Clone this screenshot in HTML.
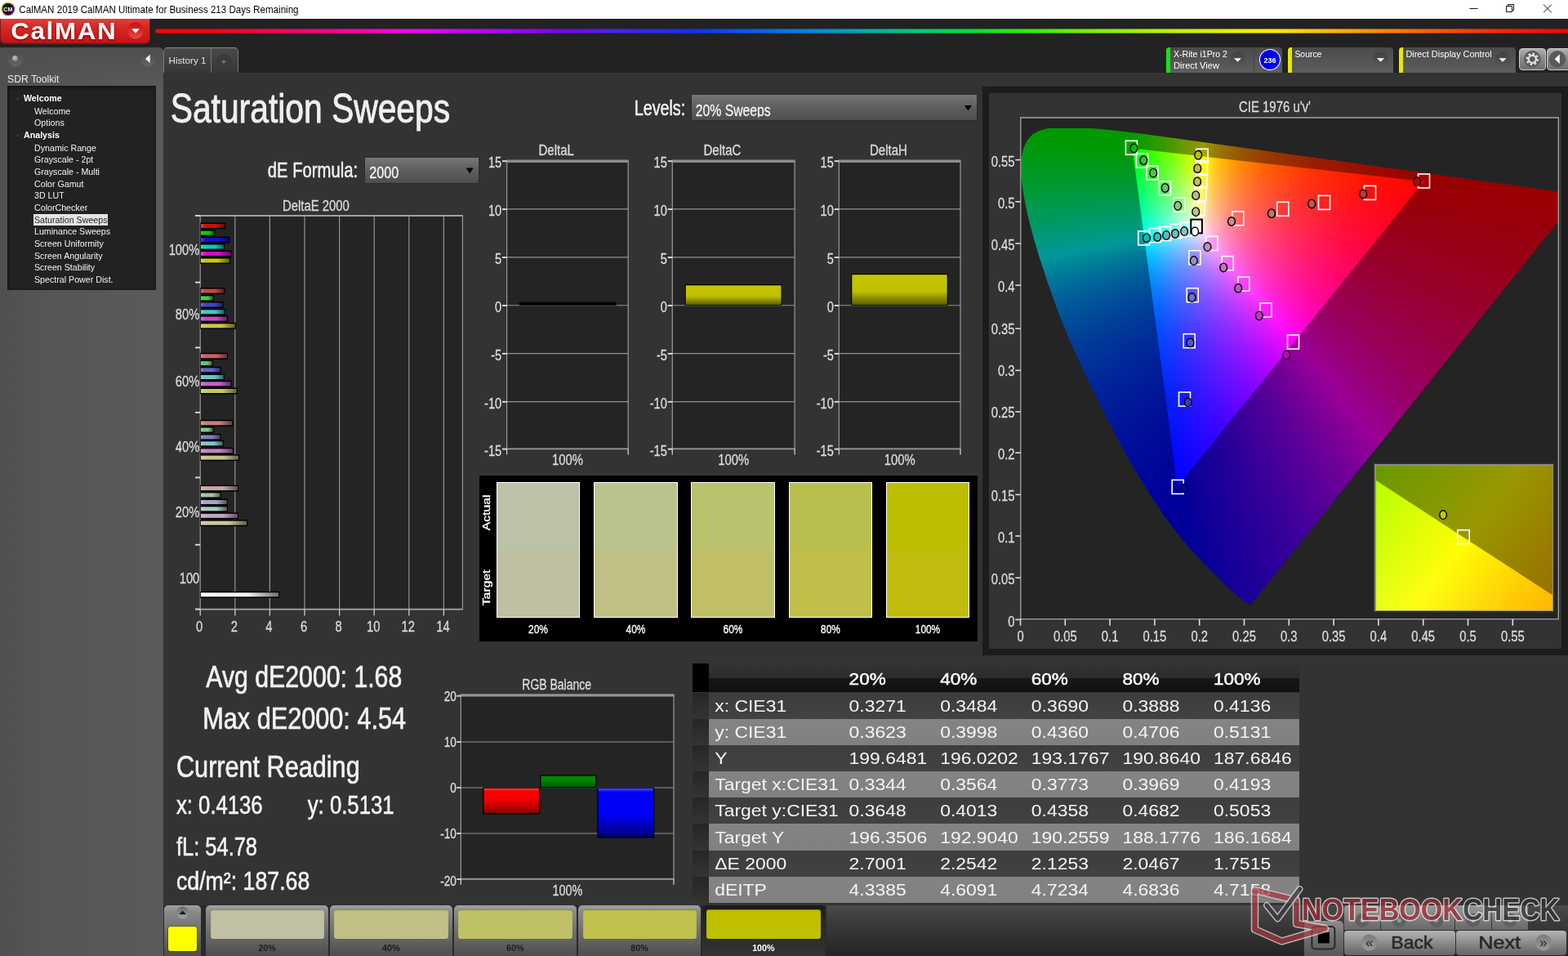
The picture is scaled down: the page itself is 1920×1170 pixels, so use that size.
<!DOCTYPE html>
<html lang="en"><head><meta charset="utf-8"><title>CalMAN 2019 - Saturation Sweeps</title>
<style>
*{margin:0;padding:0;box-sizing:border-box}
html,body{width:1920px;height:1170px;overflow:hidden;background:#333;font-family:"Liberation Sans",sans-serif}
#r{position:relative;width:1920px;height:1170px;overflow:hidden;background:#333}
#r div{position:absolute}
#r svg{position:absolute;left:0;top:0;will-change:transform}
svg text{font-family:"Liberation Sans",sans-serif;white-space:pre}
.g div{position:absolute;}
</style></head>
<body><div id="r">
<div style="left:0px;top:23px;width:1920px;height:66px;background:#222"></div>
<div style="left:0px;top:0px;width:1920px;height:23px;background:#fff"></div>
<div style="left:0.5px;top:23px;width:182px;height:29.6px;background:linear-gradient(#e0403c 0,#d62724 35%,#c41414 100%);border-radius:0 0 5px 5px;box-shadow:0 1px 0 #6a2020, 1px 0 0 #7a1a1a, -1px 0 0 #7a1a1a, inset 0 -1px 0 #a81010"></div>
<div style="left:190px;top:35px;width:1730px;height:6px;background:linear-gradient(90deg,#ff0000 0px,#ff0010 70px,#ff0060 160px,#ff00a0 230px,#ff00e0 290px,#f000ff 330px,#b800ff 410px,#8000ff 490px,#4820ff 570px,#1030ff 660px,#0070f0 760px,#0098d0 830px,#00c090 910px,#00dc40 990px,#30f000 1070px,#80f000 1150px,#b8f000 1230px,#e8f000 1310px,#ffe800 1370px,#ffa800 1460px,#ff5c00 1560px,#ff2000 1660px,#ff0000 1730px);border-radius:3px 0 0 3px"></div>
<div style="left:190px;top:35px;width:1730px;height:6px;background:linear-gradient(rgba(34,34,34,.75) 0,rgba(34,34,34,0) 22%,rgba(34,34,34,0) 78%,rgba(34,34,34,.75) 100%)"></div>
<div style="left:0px;top:58px;width:200px;height:1112px;background:linear-gradient(90deg,#4f4f4f 0,#555 22%,#5a5a5a 100%);border-radius:0 6px 0 0"></div>
<div style="left:0px;top:58px;width:200px;height:50px;background:linear-gradient(#4f4f4f 0,rgba(88,88,88,0) 100%);border-radius:0 6px 0 0"></div>
<div style="left:9px;top:105px;width:182px;height:250px;background:#222;box-shadow:inset 0 2px 4px #111, inset 2px 0 3px #1a1a1a"></div>
<div style="left:200px;top:58px;width:92px;height:31px;background:linear-gradient(#4a4a4a,#363636);border:1px solid #777;border-top-color:#8c8c8c;border-bottom:none;border-radius:5px 5px 0 0"></div>
<div style="left:258px;top:59px;width:1px;height:30px;background:#777"></div>
<div style="left:200px;top:89px;width:1720px;height:1020px;background:#333"></div>
<div style="left:1428.3px;top:58px;width:142px;height:31px;background:linear-gradient(#4a4a4a 0,#5e5e5e 100%);border-radius:4px 4px 0 0;overflow:hidden"><div style="left:0;top:0;width:5px;height:32px;background:#18e018"></div></div>
<div style="left:1535px;top:60px;width:1px;height:28px;background:#444"></div>
<div style="left:1576.7px;top:58px;width:129.5px;height:31px;background:linear-gradient(#4a4a4a 0,#5e5e5e 100%);border-radius:4px 4px 0 0;overflow:hidden"><div style="left:0;top:0;width:5px;height:32px;background:#e8e800"></div></div>
<div style="left:1712.7px;top:58px;width:143px;height:31px;background:linear-gradient(#4a4a4a 0,#5e5e5e 100%);border-radius:4px 4px 0 0;overflow:hidden"><div style="left:0;top:0;width:5px;height:32px;background:#e8e800"></div></div>
<div style="left:1860px;top:58.5px;width:33px;height:27.5px;background:linear-gradient(#b0b0b0 0,#8a8a8a 45%,#6e6e6e 100%);border-radius:4px;border:1px solid #ccc;box-shadow:0 0 0 1px #222"></div>
<div style="left:1893.5px;top:58.5px;width:30px;height:27.5px;background:linear-gradient(#b0b0b0 0,#8a8a8a 45%,#6e6e6e 100%);border-radius:4px 0 0 4px;border:1px solid #ccc;box-shadow:0 0 0 1px #222"></div>
<div style="left:846px;top:114.6px;width:350.7px;height:33px;background:linear-gradient(#777 0,#5e5e5e 50%,#4e4e4e 100%);border:1px solid #2b2b2b;overflow:hidden"></div>
<div style="left:446.2px;top:191.7px;width:140.6px;height:33px;background:linear-gradient(#777 0,#5e5e5e 50%,#4e4e4e 100%);border:1px solid #2b2b2b"></div>
<div style="left:587px;top:582.3px;width:610px;height:203px;background:#000"></div>
<div style="left:1203px;top:106px;width:717px;height:696px;background:#1c1c1c"></div>
<div style="left:1211px;top:114.4px;width:701px;height:679.4px;background:#333"></div>
<div style="left:1249.8px;top:144px;width:658.5px;height:613.6px;background:#242424"></div>
<div style="left:1250px;top:144px;width:657.7px;height:613px;overflow:hidden"><div class="g" style="left:0;top:0;width:697.7px;height:613px;clip-path:polygon(277.63px 594.95px,278.45px 595.28px,279.32px 595.45px,280.2px 595.44px,281.07px 595.26px,281.88px 594.91px,282.61px 594.42px,283.23px 593.78px,679.1px 100.51px,679.57px 99.79px,679.9px 99px,680.07px 98.15px,680.07px 97.29px,679.91px 96.44px,679.59px 95.64px,679.13px 94.92px,678.54px 94.3px,677.84px 93.8px,677.05px 93.44px,676.21px 93.24px,227.58px 30.67px,153.2px 20.59px,125.28px 17.11px,106.59px 15.02px,97.24px 14.11px,83.02px 13px,36.62px 13px,31.87px 13.52px,22.88px 15.93px,21.8px 16.38px,14.62px 20.55px,13.49px 21.49px,8.1px 27.68px,7.41px 28.73px,3.78px 36.49px,3.49px 37.33px,1.42px 45.84px,0.46px 55.4px,0.4px 65.21px,0.97px 74.59px,2.01px 83.92px,3.39px 93.21px,5.03px 102.46px,6.88px 111.57px,8.95px 120.75px,11.18px 129.88px,16.05px 148.09px,18.65px 157.11px,24.15px 175.06px,33px 201.8px,42.47px 228.29px,49.17px 245.83px,52.65px 254.55px,59.87px 271.88px,67.43px 289.1px,79.25px 314.66px,91.48px 340.02px,104.03px 365.24px,116.99px 390.2px,125.95px 406.74px,135.16px 423.05px,139.88px 431.16px,149.58px 447.3px,159.53px 463.17px,164.64px 471.05px,175.23px 486.65px,180.65px 494.22px,186.28px 501.74px,192.12px 509.22px,198.05px 516.5px,204.07px 523.6px,210.29px 530.66px,216.68px 537.65px,229.67px 551.13px,256.08px 577.53px,276.89px 594.46px)"><div style="left:27px;top:12px;width:77px;height:2px;background:linear-gradient(90deg,#0f0,#0f0 76px)"></div><div style="left:20px;top:14px;width:102px;height:2px;background:linear-gradient(90deg,#0f0,#0f0 101px)"></div><div style="left:17px;top:16px;width:122px;height:2px;background:linear-gradient(90deg,#0f0,#03ff00 118px,#09ff00 121px)"></div><div style="left:13px;top:18px;width:142px;height:2px;background:linear-gradient(90deg,#0f0,#02ff00 122px,#2eff00 141px)"></div><div style="left:11px;top:20px;width:159px;height:2px;background:linear-gradient(90deg,#0f0,#02ff00 124px,#53ff00 158px)"></div><div style="left:9px;top:22px;width:176px;height:2px;background:linear-gradient(90deg,#0f0,#01ff00 126px,#6bff00 169px,#7bff00 175px)"></div><div style="left:8px;top:24px;width:191px;height:2px;background:linear-gradient(90deg,#00ff03,#03ff00 128px,#6aff00 170px,#a5ff00 190px)"></div><div style="left:6px;top:26px;width:208px;height:2px;background:linear-gradient(90deg,#00ff05,#0f0 84px,#02ff00 130px,#6aff00 172px,#d6ff00 207px)"></div><div style="left:5px;top:28px;width:224px;height:2px;background:linear-gradient(90deg,#00ff08,#0f0 88px,#01ff00 131px,#6aff00 173px,#daff00 209px,#fffd00 220px,#fff200 223px)"></div><div style="left:4px;top:30px;width:239px;height:2px;background:linear-gradient(90deg,#00ff0b,#0f0 103px,#03ff00 133px,#6dff00 175px,#daff00 210px,#fffc00 221px,#ffc800 238px)"></div><div style="left:3px;top:32px;width:255px;height:2px;background:linear-gradient(90deg,#00ff0e,#0f0 119px,#02ff00 134px,#6dff00 176px,#daff00 211px,#fffc00 222px,#ffc300 241px,#ffa600 254px)"></div><div style="left:2px;top:34px;width:270px;height:2px;background:linear-gradient(90deg,#00ff10,#02ff00 135px,#6aff00 176px,#d7ff00 211px,#ff0 222px,#ffc400 241px,#ff9000 267px,#ff8c00 269px)"></div><div style="left:2px;top:36px;width:284px;height:2px;background:linear-gradient(90deg,#00ff13,#01ff00 135px,#69ff00 176px,#d8ff00 211px,#fffe00 222px,#ffc400 241px,#ff8f00 267px,#ff7800 283px)"></div><div style="left:1px;top:38px;width:300px;height:2px;background:linear-gradient(90deg,#00ff16,#03ff02 137px,#6cff00 178px,#dcff00 213px,#fffe00 223px,#ffc300 242px,#ff8e00 268px,#ff6500 299px)"></div><div style="left:1px;top:40px;width:314px;height:2px;background:linear-gradient(90deg,#00ff18,#02ff06 137px,#6cff00 178px,#d8ff00 212px,#fffd00 223px,#ffc300 242px,#ff8e00 268px,#ff5f00 305px,#ff5700 313px)"></div><div style="left:0px;top:42px;width:329px;height:2px;background:linear-gradient(90deg,#00ff1b,#02ff09 138px,#6cff01 179px,#d9ff00 213px,#fffd00 224px,#ffc200 243px,#ff8d00 269px,#ff5e00 306px,#ff4b00 328px)"></div><div style="left:0px;top:44px;width:344px;height:2px;background:linear-gradient(90deg,#00ff1e,#01ff0d 138px,#69ff05 178px,#d6ff00 212px,#fffc00 224px,#ffc100 243px,#ff8d00 269px,#ff5e00 306px,#ff3f00 343px)"></div><div style="left:0px;top:46px;width:358px;height:2px;background:linear-gradient(90deg,#00ff21,#03ff10 139px,#6bff09 179px,#daff02 213px,#ff0 223px,#ffc300 242px,#ff8e00 268px,#ff5e00 305px,#ff3600 357px)"></div><div style="left:0px;top:48px;width:372px;height:2px;background:linear-gradient(90deg,#00ff23,#02ff14 139px,#6bff0d 179px,#daff06 213px,#ffff04 223px,#ffc500 241px,#ff9000 266px,#ff6000 302px,#ff3600 356px,#ff2e00 371px)"></div><div style="left:0px;top:50px;width:387px;height:2px;background:linear-gradient(90deg,#00ff26,#02ff18 139px,#6bff11 179px,#daff0b 213px,#fffe08 223px,#ffc503 241px,#ff9000 266px,#ff6000 302px,#ff3600 356px,#ff2600 386px)"></div><div style="left:0px;top:52px;width:401px;height:2px;background:linear-gradient(90deg,#00ff29,#01ff1b 139px,#6bff15 179px,#dbff0f 213px,#fffd0d 223px,#ffc407 241px,#ff8f01 266px,#ff5f00 302px,#ff3500 356px,#ff2000 400px)"></div><div style="left:0px;top:54px;width:415px;height:2px;background:linear-gradient(90deg,#00ff2c,#03ff1f 140px,#6bff1a 179px,#d7ff14 212px,#fffd12 223px,#ffc30b 241px,#ff8e04 266px,#ff5f00 302px,#ff3500 356px,#ff1a00 414px)"></div><div style="left:0px;top:56px;width:430px;height:2px;background:linear-gradient(90deg,#00ff2e,#02ff23 140px,#6aff1e 179px,#d8ff19 212px,#fffc16 223px,#ffc30f 241px,#ff8e07 266px,#ff5e01 302px,#ff3400 356px,#ff1500 429px)"></div><div style="left:0px;top:58px;width:444px;height:2px;background:linear-gradient(90deg,#00ff31,#02ff27 140px,#6aff22 179px,#d8ff1d 212px,#ffff1c 222px,#ffc212 241px,#ff8d0a 266px,#ff5e03 302px,#ff3400 356px,#ff1000 442px,#ff1000 443px)"></div><div style="left:0px;top:60px;width:458px;height:2px;background:linear-gradient(90deg,#00ff34,#01ff2b 140px,#6aff26 179px,#d9ff22 212px,#ffff21 222px,#ffc417 240px,#ff8e0e 265px,#ff5f06 300px,#ff3500 353px,#f10 437px,#ff0c00 457px)"></div><div style="left:0px;top:62px;width:473px;height:2px;background:linear-gradient(90deg,#00ff37,#03ff2e 141px,#6aff2b 179px,#d9ff27 212px,#fffe25 222px,#ffc31b 240px,#ff8e11 265px,#ff5f08 300px,#ff3501 353px,#f10 437px,#ff0700 472px)"></div><div style="left:0px;top:64px;width:487px;height:2px;background:linear-gradient(90deg,#00ff3a,#02ff32 141px,#6aff2f 179px,#d9ff2c 212px,#fffe2a 222px,#ffc31f 240px,#ff8d14 265px,#ff5e0b 300px,#ff3403 353px,#f10 437px,#ff0400 486px)"></div><div style="left:0px;top:66px;width:501px;height:2px;background:linear-gradient(90deg,#00ff3d,#01ff36 141px,#69ff34 179px,#d6ff31 211px,#fffd2f 222px,#ffc223 240px,#ff8e18 264px,#ff5e0e 299px,#ff3505 351px,#f10 434px,#f00 500px)"></div><div style="left:0px;top:68px;width:516px;height:2px;background:linear-gradient(90deg,#00ff40,#01ff3a 141px,#69ff38 179px,#d6ff36 211px,#fffc34 222px,#ffc127 240px,#ff8d1b 264px,#ff5e10 299px,#ff3407 351px,#f10 434px,#f00 515px)"></div><div style="left:0px;top:70px;width:530px;height:2px;background:linear-gradient(90deg,#00ff42,#03ff3e 142px,#6cff3d 180px,#dbff3b 212px,#fffc39 222px,#ffc12b 240px,#ff8d1e 264px,#ff5d13 299px,#ff3408 351px,#ff1000 434px,#f00 513px,#f00 529px)"></div><div style="left:0px;top:72px;width:544px;height:2px;background:linear-gradient(90deg,#00ff45,#02ff42 142px,#6cff41 180px,#dbff40 212px,#ffff3f 221px,#ffc330 239px,#ff8e22 263px,#ff5f16 297px,#ff350b 348px,#ff1202 429px,#f00 511px,#f00 543px)"></div><div style="left:0px;top:74px;width:559px;height:2px;background:linear-gradient(90deg,#00ff48,#01ff47 142px,#69ff46 179px,#d8ff45 211px,#ffff45 221px,#ffc535 238px,#ff8f26 262px,#ff5f18 296px,#ff350d 347px,#ff1103 428px,#f00 510px,#f00 558px)"></div><div style="left:0px;top:76px;width:573px;height:2px;background:linear-gradient(90deg,#00ff4b,#01ff4b 142px,#68ff4a 179px,#d8ff4a 211px,#fffe4a 221px,#ffc439 238px,#ff8e29 262px,#ff5f1b 296px,#ff350f 347px,#ff1104 428px,#f00 508px,#f00 572px)"></div><div style="left:0px;top:78px;width:587px;height:2px;background:linear-gradient(90deg,#00ff4e,#02ff4f 143px,#6bff4f 180px,#d8ff4f 211px,#fffd4f 221px,#ffc33d 238px,#ff8e2c 262px,#ff5e1e 296px,#ff3411 347px,#ff1106 428px,#f00 506px,#f00 586px)"></div><div style="left:0px;top:80px;width:602px;height:2px;background:linear-gradient(90deg,#00ff51,#02ff53 143px,#6bff54 180px,#d9ff55 211px,#fffd54 221px,#ffc341 238px,#ff8f30 261px,#ff6021 294px,#ff3613 344px,#ff1208 423px,#ff0001 504px,#f00 601px)"></div><div style="left:0px;top:82px;width:616px;height:2px;background:linear-gradient(90deg,#00ff54,#01ff57 143px,#6bff59 180px,#d9ff5a 211px,#fffc59 221px,#ffc246 238px,#ff8e34 261px,#ff5f24 294px,#ff3515 344px,#ff1109 423px,#ff0002 503px,#f00 615px)"></div><div style="left:0px;top:84px;width:630px;height:2px;background:linear-gradient(90deg,#00ff57,#03ff5c 144px,#6bff5e 180px,#daff5f 211px,#ffff60 220px,#ffc44b 237px,#ff8f38 260px,#ff6027 293px,#ff3618 342px,#ff120b 420px,#ff0003 501px,#f00 629px)"></div><div style="left:1px;top:86px;width:644px;height:2px;background:linear-gradient(90deg,#00ff5b,#02ff60 143px,#6aff63 179px,#daff65 210px,#ff6 219px,#ffc34f 236px,#ff8e3b 259px,#ff5f29 292px,#ff351a 341px,#ff120c 419px,#ff0005 498px,#f00 643px)"></div><div style="left:1px;top:88px;width:658px;height:2px;background:linear-gradient(90deg,#00ff5e,#02ff65 143px,#6aff67 179px,#d6ff6a 209px,#fffe6b 219px,#ffc354 236px,#ff8e3f 259px,#ff5e2c 292px,#ff351c 341px,#ff110e 419px,#ff0006 497px,#f00 657px)"></div><div style="left:1px;top:90px;width:658px;height:2px;background:linear-gradient(90deg,#00ff61,#01ff69 143px,#6aff6d 179px,#d7ff70 209px,#fffd71 219px,#ffc258 236px,#ff8d42 259px,#ff5e2f 292px,#ff341e 341px,#ff100f 420px,#ff0007 495px,#f00 657px)"></div><div style="left:2px;top:92px;width:657px;height:2px;background:linear-gradient(90deg,#00ff64,#03ff6e 143px,#6aff72 178px,#d7ff76 208px,#fffd76 218px,#ffc45e 234px,#ff9047 256px,#ff6033 288px,#ff3621 336px,#ff1211 412px,#ff0008 492px,#f00 656px)"></div><div style="left:2px;top:94px;width:657px;height:2px;background:linear-gradient(90deg,#00ff67,#02ff72 143px,#6aff77 178px,#d8ff7b 208px,#fffc7c 218px,#ffc362 234px,#ff8f4b 256px,#ff6036 288px,#ff3623 336px,#ff1213 412px,#ff000a 490px,#f00 656px)"></div><div style="left:2px;top:96px;width:657px;height:2px;background:linear-gradient(90deg,#00ff6a,#01ff77 143px,#69ff7c 178px,#d8ff81 208px,#feff83 217px,#ffc367 234px,#ff8f4f 256px,#ff5f38 288px,#ff3525 336px,#ff1214 412px,#ff000b 489px,#f00 656px)"></div><div style="left:3px;top:98px;width:656px;height:2px;background:linear-gradient(90deg,#00ff6e,#01ff7c 142px,#69ff81 177px,#d8ff87 207px,#ffff89 216px,#ffc56d 232px,#ff9053 254px,#ff613c 285px,#ff3728 332px,#ff1317 406px,#ff000c 486px,#ff0001 655px)"></div><div style="left:3px;top:100px;width:656px;height:2px;background:linear-gradient(90deg,#00ff71,#03ff81 143px,#6cff87 178px,#d9ff8d 207px,#fffe8f 216px,#ffc472 232px,#ff8f57 254px,#ff603f 285px,#ff362a 332px,#ff1218 406px,#ff000e 484px,#ff0002 655px)"></div><div style="left:3px;top:102px;width:656px;height:2px;background:linear-gradient(90deg,#00ff74,#02ff85 143px,#6cff8c 178px,#d9ff93 207px,#fffe95 216px,#ffc376 232px,#ff8e5b 254px,#ff6042 285px,#ff362c 332px,#ff1219 407px,#ff000f 483px,#ff0002 655px)"></div><div style="left:4px;top:104px;width:655px;height:2px;background:linear-gradient(90deg,#00ff78,#01ff8a 142px,#68ff91 176px,#d6ff99 205px,#fffd9b 215px,#ffc37b 231px,#ff8e5e 253px,#ff5f45 284px,#ff352e 331px,#ff111b 406px,#ff0010 480px,#ff0003 654px)"></div><div style="left:4px;top:106px;width:655px;height:2px;background:linear-gradient(90deg,#00ff7b,#01ff8f 142px,#68ff97 176px,#d6ff9f 205px,#fffca1 215px,#ffc280 231px,#ff8d62 253px,#ff5e48 284px,#ff3531 331px,#ff111c 406px,#f01 479px,#ff0004 654px)"></div><div style="left:5px;top:108px;width:654px;height:2px;background:linear-gradient(90deg,#00ff7e,#03ff94 142px,#6bff9d 176px,#dbffa6 205px,#fffca6 214px,#ffc185 230px,#ff8c66 252px,#ff5e4b 283px,#ff3433 330px,#ff101e 405px,#ff0013 476px,#ff0005 653px)"></div><div style="left:5px;top:110px;width:654px;height:2px;background:linear-gradient(90deg,#00ff82,#02ff99 142px,#6bffa2 176px,#dbffac 205px,#ffffaf 213px,#ffc38b 229px,#ff8f6c 250px,#ff6150 280px,#ff3737 325px,#ff1321 397px,#ff0014 474px,#ff0005 653px)"></div><div style="left:5px;top:112px;width:654px;height:2px;background:linear-gradient(90deg,#00ff85,#01ff9e 142px,#6bffa8 176px,#d7ffb2 204px,#ffffb5 213px,#ffc692 228px,#ff9171 249px,#ff6154 279px,#ff3739 324px,#ff1323 395px,#ff0016 472px,#ff0006 653px)"></div><div style="left:6px;top:114px;width:653px;height:2px;background:linear-gradient(90deg,#00ff89,#00ffa3 141px,#67ffad 174px,#d3ffb8 202px,#fffebc 212px,#ffc597 227px,#ff9075 248px,#ff6057 278px,#ff363c 323px,#ff1325 394px,#ff0017 469px,#ff0007 652px)"></div><div style="left:6px;top:116px;width:653px;height:2px;background:linear-gradient(90deg,#00ff8c,#03ffa9 142px,#6bffb3 175px,#d8ffbf 203px,#fffdc2 212px,#ffc49c 227px,#ff8f79 248px,#ff605a 278px,#ff363e 323px,#ff1226 394px,#ff0019 468px,#ff0008 652px)"></div><div style="left:7px;top:118px;width:652px;height:2px;background:linear-gradient(90deg,#00ff90,#02ffae 141px,#6affb9 174px,#d9ffc5 202px,#fffdc8 211px,#ffc3a1 226px,#ff8e7d 247px,#ff5f5d 277px,#ff3540 322px,#ff1128 394px,#ff001a 465px,#ff0009 651px)"></div><div style="left:7px;top:120px;width:652px;height:2px;background:linear-gradient(90deg,#00ff93,#01ffb3 141px,#6affbf 174px,#d9ffcc 202px,#fffcce 211px,#ffc3a6 226px,#ff8e81 247px,#ff5e60 277px,#ff3542 322px,#ff1129 394px,#ff001c 464px,#ff0009 651px)"></div><div style="left:8px;top:122px;width:651px;height:2px;background:linear-gradient(90deg,#00ff97,#00ffb7 137px,#03ffb9 141px,#6affc5 173px,#d9ffd3 201px,#feffd7 209px,#ffc2ab 225px,#ff8d85 246px,#ff5e63 276px,#ff3445 321px,#ff102b 393px,#ff001d 461px,#ff000a 650px)"></div><div style="left:8px;top:124px;width:651px;height:2px;background:linear-gradient(90deg,#00ff9b,#00ffbc 135px,#02ffbe 141px,#6affcb 173px,#d6ffd9 200px,#ffffdf 209px,#ffc4b3 224px,#ff908c 244px,#ff6169 273px,#ff374a 316px,#ff132f 385px,#ff001f 459px,#ff000b 650px)"></div><div style="left:9px;top:126px;width:650px;height:2px;background:linear-gradient(90deg,#00ff9e,#00ffc0 131px,#02ffc4 140px,#69ffd2 172px,#d6ffe0 199px,#fffee5 208px,#ffc3b8 223px,#ff9090 243px,#ff606c 272px,#ff364c 315px,#ff1230 384px,#ff0020 456px,#ff000c 649px)"></div><div style="left:9px;top:128px;width:650px;height:2px;background:linear-gradient(90deg,#00ffa2,#00ffc5 129px,#01ffc9 140px,#69ffd8 172px,#d6ffe7 199px,#fffeec 208px,#ffc3bd 223px,#ff8f94 243px,#ff5f6f 272px,#ff364e 315px,#ff1232 384px,#f02 455px,#ff000c 649px)"></div><div style="left:10px;top:130px;width:648px;height:2px;background:linear-gradient(90deg,#00ffa6,#00ffc9 126px,#03ffcf 140px,#6dffdf 172px,#dbffef 199px,#fffdf3 207px,#ffc2c3 222px,#ff8e99 242px,#ff5f72 271px,#ff3551 314px,#ff1134 383px,#ff0023 452px,#ff000d 647px)"></div><div style="left:10px;top:132px;width:647px;height:2px;background:linear-gradient(90deg,#0fa,#00ffce 123px,#02ffd5 140px,#6cffe5 172px,#dcfff6 199px,#fffcf9 207px,#ffc1c8 222px,#ff8d9d 242px,#ff5e75 271px,#ff3553 314px,#ff1135 383px,#ff0025 451px,#ff000e 646px)"></div><div style="left:11px;top:134px;width:644px;height:2px;background:linear-gradient(90deg,#00ffad,#00ffd3 121px,#01ffdb 139px,#68ffeb 170px,#d8fffd 197px,#fff7fc 207px,#ffbdcb 222px,#ff889e 243px,#ff5975 273px,#ff3152 318px,#ff0e34 390px,#ff0026 449px,#ff000f 643px)"></div><div style="left:11px;top:136px;width:643px;height:2px;background:linear-gradient(90deg,#00ffb1,#00ffd7 118px,#01ffe0 139px,#68fff2 170px,#ccfbff 195px,#fff1ff 208px,#ffb9cd 223px,#ff85a0 244px,#ff5878 274px,#ff2f54 320px,#ff0c35 394px,#ff0028 449px,#ff0010 642px)"></div><div style="left:12px;top:138px;width:640px;height:2px;background:linear-gradient(90deg,#00ffb5,#00ffdc 116px,#03ffe7 139px,#6cfff9 170px,#acf9ff 187px,#ffe8fd 209px,#ffafcb 225px,#ff7d9d 247px,#ff5074 279px,#ff2851 328px,#ff0732 408px,#ff0028 452px,#f01 639px)"></div><div style="left:12px;top:140px;width:638px;height:2px;background:linear-gradient(90deg,#00ffb9,#00ffe0 114px,#02ffed 139px,#76fcff 173px,#ffdefc 211px,#ffa6c8 228px,#ff7499 252px,#ff4770 287px,#ff214c 341px,#ff002e 430px,#ff0015 605px,#ff0012 637px)"></div><div style="left:13px;top:142px;width:636px;height:2px;background:linear-gradient(90deg,#00ffbd,#00ffe5 111px,#01fff3 138px,#54fcff 163px,#ffdaff 211px,#ffa3cb 228px,#ff719b 252px,#ff4572 287px,#ff1f4e 341px,#ff0030 429px,#ff0016 601px,#ff0013 635px)"></div><div style="left:13px;top:144px;width:634px;height:2px;background:linear-gradient(90deg,#00ffc1,#00ffe9 109px,#00fff9 138px,#3afaff 156px,#f9d4ff 211px,#ffcaf6 215px,#ff93c1 234px,#ff6392 261px,#ff3969 301px,#ff1445 364px,#ff002f 436px,#ff0015 612px,#ff0014 633px)"></div><div style="left:14px;top:146px;width:631px;height:2px;background:linear-gradient(90deg,#00ffc5,#0fe 107px,#03ffff 138px,#bed9ff 195px,#ffc9fc 214px,#ff92c6 233px,#ff6295 260px,#ff386b 300px,#ff1447 363px,#ff0031 434px,#ff0017 607px,#ff0015 630px)"></div><div style="left:14px;top:148px;width:630px;height:2px;background:linear-gradient(90deg,#00ffc9,#00fff2 105px,#00fcff 133px,#02f8ff 138px,#bdd2ff 196px,#ffc4fe 215px,#ff8fc8 234px,#ff6098 261px,#ff376d 301px,#ff1349 364px,#f03 432px,#ff0018 601px,#ff0015 629px)"></div><div style="left:15px;top:150px;width:627px;height:2px;background:linear-gradient(90deg,#00ffce,#00fff7 103px,#00faff 124px,#01f3ff 137px,#bfccff 197px,#ffbdfd 216px,#ff8ac8 235px,#ff5c98 262px,#ff346e 302px,#ff124a 365px,#ff0034 430px,#ff0019 595px,#ff0016 626px)"></div><div style="left:16px;top:152px;width:625px;height:2px;background:linear-gradient(90deg,#00ffd2,#00fffc 101px,#03ecff 137px,#c1c5ff 198px,#ffb5fc 217px,#ff83c6 237px,#ff5796 265px,#ff2f6c 307px,#ff0e48 373px,#ff0036 429px,#ff001b 592px,#ff0017 624px)"></div><div style="left:16px;top:154px;width:623px;height:2px;background:linear-gradient(90deg,#00ffd6,#00fcff 101px,#02e7ff 137px,#c0bfff 199px,#ffb1fe 218px,#ff80c8 238px,#ff5598 266px,#ff2e6e 308px,#ff0d49 374px,#ff0037 428px,#ff001c 588px,#ff0018 622px)"></div><div style="left:17px;top:156px;width:620px;height:2px;background:linear-gradient(90deg,#00ffdb,#00fcff 90px,#02e2ff 136px,#bfbaff 199px,#ffabfd 219px,#ff7bc8 239px,#ff5097 268px,#ff2b6d 311px,#ff0a48 379px,#ff0039 427px,#ff001d 585px,#ff0019 619px)"></div><div style="left:17px;top:158px;width:619px;height:2px;background:linear-gradient(90deg,#00ffdf,#00fcff 80px,#01ddff 136px,#beb4ff 200px,#ffa4fc 221px,#ff75c6 242px,#ff4c97 271px,#ff276c 315px,#ff0848 384px,#ff003a 427px,#ff001e 583px,#ff001a 618px)"></div><div style="left:18px;top:160px;width:616px;height:2px;background:linear-gradient(90deg,#00ffe3,#00fcff 70px,#03d7ff 136px,#c0aeff 201px,#ffa0fe 221px,#ff72c8 242px,#ff4a99 271px,#ff266e 315px,#ff0749 384px,#ff003c 426px,#ff001f 580px,#ff001b 615px)"></div><div style="left:18px;top:162px;width:615px;height:2px;background:linear-gradient(90deg,#00ffe7,#00fcff 60px,#02d2ff 136px,#bfa9ff 202px,#ff9afd 223px,#ff6ec8 244px,#ff4698 274px,#ff236d 319px,#ff0549 390px,#ff003b 434px,#ff001f 593px,#ff001c 614px)"></div><div style="left:19px;top:164px;width:612px;height:2px;background:linear-gradient(90deg,#00ffec,#00fbff 50px,#01ceff 135px,#bea5ff 202px,#ff94fc 224px,#ff68c6 246px,#ff4296 277px,#ff206c 323px,#ff0248 396px,#ff0029 522px,#ff001d 611px)"></div><div style="left:20px;top:166px;width:609px;height:2px;background:linear-gradient(90deg,#00fff1,#00fcff 39px,#01c9ff 134px,#bda0ff 202px,#ff91fe 224px,#ff66c8 246px,#ff4098 277px,#ff1f6e 323px,#ff0249 396px,#ff002a 521px,#ff001e 608px)"></div><div style="left:20px;top:168px;width:608px;height:2px;background:linear-gradient(90deg,#00fff5,#00fbff 30px,#02c4ff 135px,#bf9bff 204px,#ff8bfd 226px,#ff62c8 248px,#ff3d99 279px,#ff1c6e 326px,#ff0049 400px,#ff002a 527px,#ff001f 607px)"></div><div style="left:21px;top:170px;width:605px;height:2px;background:linear-gradient(90deg,#00fffa,#00f8ff 26px,#02c0ff 134px,#be96ff 204px,#ff86fc 227px,#ff5dc6 250px,#ff3997 282px,#ff196d 330px,#ff0049 403px,#ff002a 531px,#ff0020 604px)"></div><div style="left:22px;top:172px;width:603px;height:2px;background:linear-gradient(90deg,#0ff,#01bcff 133px,#bd92ff 204px,#ff83fe 227px,#ff5bc8 250px,#ff3898 282px,#ff186e 330px,#ff004b 401px,#ff002c 527px,#ff0021 602px)"></div><div style="left:22px;top:174px;width:601px;height:2px;background:linear-gradient(90deg,#00fbff,#03b8ff 134px,#bf8dff 206px,#ff7efd 229px,#ff57c8 252px,#ff3498 285px,#ff166d 334px,#ff004d 401px,#ff002d 526px,#f02 600px)"></div><div style="left:23px;top:176px;width:598px;height:2px;background:linear-gradient(90deg,#00f6ff,#02b4ff 133px,#be89ff 206px,#ff79fc 230px,#ff52c6 254px,#ff3096 288px,#ff136c 338px,#ff004e 400px,#ff002f 523px,#ff0024 597px)"></div><div style="left:23px;top:178px;width:597px;height:2px;background:linear-gradient(90deg,#00f2ff,#01b0ff 133px,#be85ff 207px,#ff76fe 231px,#ff50c8 255px,#ff2f98 289px,#ff126e 339px,#ff0050 398px,#ff0030 518px,#ff0025 596px)"></div><div style="left:24px;top:180px;width:594px;height:2px;background:linear-gradient(90deg,#00edff,#01adff 132px,#bd82ff 207px,#ff71fd 232px,#ff4dc8 256px,#ff2d98 290px,#ff106e 341px,#ff0052 396px,#ff0032 514px,#ff0026 593px)"></div><div style="left:25px;top:182px;width:592px;height:2px;background:linear-gradient(90deg,#00e9ff,#02a9ff 132px,#be7dff 208px,#ff6dfc 233px,#ff49c6 258px,#ff2997 293px,#ff0d6d 345px,#ff0054 395px,#f03 512px,#ff0027 591px)"></div><div style="left:25px;top:184px;width:590px;height:2px;background:linear-gradient(90deg,#00e5ff,#02a5ff 132px,#c079ff 210px,#ff6afe 234px,#ff47c8 259px,#ff2898 294px,#ff0c6e 346px,#ff0056 393px,#ff0035 507px,#ff0028 589px)"></div><div style="left:26px;top:186px;width:587px;height:2px;background:linear-gradient(90deg,#00e1ff,#01a2ff 131px,#bf76ff 210px,#ff66fd 235px,#ff44c8 260px,#ff2598 296px,#ff0a6e 349px,#ff0058 392px,#ff0037 505px,#ff0029 586px)"></div><div style="left:27px;top:188px;width:585px;height:2px;background:linear-gradient(90deg,#0df,#039eff 131px,#c172ff 211px,#ff62fc 236px,#ff40c6 262px,#ff2296 299px,#ff076c 354px,#ff0059 392px,#ff0038 505px,#ff002a 584px)"></div><div style="left:27px;top:190px;width:583px;height:2px;background:linear-gradient(90deg,#00d9ff,#029bff 131px,#c06eff 212px,#ff5ffe 237px,#ff3ec8 263px,#ff2198 300px,#ff076d 355px,#ff005b 392px,#ff0039 504px,#ff002b 582px)"></div><div style="left:28px;top:192px;width:581px;height:2px;background:linear-gradient(90deg,#00d5ff,#0298ff 130px,#bf6bff 212px,#ff5bfd 238px,#ff3bc8 264px,#ff1f98 301px,#ff056e 356px,#ff005b 394px,#ff0039 507px,#ff002c 580px)"></div><div style="left:29px;top:194px;width:578px;height:2px;background:linear-gradient(90deg,#00d1ff,#0195ff 129px,#bf68ff 212px,#ff57fc 239px,#ff38c6 266px,#ff1c97 304px,#ff036c 361px,#ff0048 451px,#ff002d 577px)"></div><div style="left:29px;top:196px;width:576px;height:2px;background:linear-gradient(90deg,#00ceff,#0392ff 130px,#c064ff 214px,#ff55fe 240px,#ff36c8 267px,#ff1a98 305px,#ff026e 362px,#ff0049 452px,#ff002f 575px)"></div><div style="left:30px;top:198px;width:574px;height:2px;background:linear-gradient(90deg,#00caff,#028fff 129px,#bf62ff 214px,#ff51fd 241px,#ff33c8 268px,#ff1898 307px,#ff006d 365px,#ff0049 456px,#ff0030 573px)"></div><div style="left:31px;top:200px;width:571px;height:2px;background:linear-gradient(90deg,#00c7ff,#018cff 128px,#bf5fff 214px,#ff4efc 242px,#ff30c7 270px,#ff1596 310px,#ff006c 369px,#ff0048 463px,#ff0031 570px)"></div><div style="left:31px;top:202px;width:570px;height:2px;background:linear-gradient(90deg,#00c3ff,#0389ff 129px,#c05bff 216px,#ff4cfe 243px,#ff2ec8 271px,#ff1498 311px,#ff006e 369px,#ff0049 462px,#ff0032 569px)"></div><div style="left:32px;top:204px;width:567px;height:2px;background:linear-gradient(90deg,#00c0ff,#0286ff 128px,#bf59ff 216px,#ff48fd 244px,#ff2cc8 272px,#ff1398 312px,#ff0070 367px,#ff004b 458px,#f03 566px)"></div><div style="left:33px;top:206px;width:564px;height:2px;background:linear-gradient(90deg,#00bdff,#0284ff 127px,#bf56ff 216px,#ff45fc 245px,#ff29c7 274px,#ff1097 315px,#ff0072 365px,#ff004d 455px,#ff0035 563px)"></div><div style="left:34px;top:208px;width:562px;height:2px;background:linear-gradient(90deg,#00b9ff,#0181ff 126px,#be53ff 216px,#ff43fe 245px,#ff27c8 274px,#ff0f98 315px,#ff0075 363px,#ff004f 451px,#ff0036 561px)"></div><div style="left:34px;top:210px;width:560px;height:2px;background:linear-gradient(90deg,#00b6ff,#037eff 127px,#bf50ff 218px,#ff40fd 247px,#ff25c8 276px,#ff0d98 318px,#f07 362px,#ff0051 449px,#ff0037 559px)"></div><div style="left:35px;top:212px;width:558px;height:2px;background:linear-gradient(90deg,#00b3ff,#027cff 126px,#bf4eff 218px,#ff3dfd 248px,#ff22c7 278px,#ff0b96 321px,#ff007a 360px,#ff0053 446px,#ff0038 557px)"></div><div style="left:36px;top:214px;width:555px;height:2px;background:linear-gradient(90deg,#00b0ff,#027aff 125px,#be4bff 218px,#ff3bfe 248px,#ff21c8 278px,#ff0a98 321px,#ff007c 358px,#f05 442px,#ff0039 554px)"></div><div style="left:36px;top:216px;width:553px;height:2px;background:linear-gradient(90deg,#00adff,#0377ff 126px,#bf48ff 220px,#ff38fd 250px,#ff1fc8 280px,#ff0898 323px,#ff007e 358px,#ff0057 441px,#ff003b 552px)"></div><div style="left:37px;top:218px;width:551px;height:2px;background:linear-gradient(90deg,#0af,#0275ff 125px,#c146ff 221px,#ff35fd 251px,#ff1cc7 282px,#ff0697 326px,#ff007e 359px,#ff0057 443px,#ff003c 550px)"></div><div style="left:38px;top:220px;width:548px;height:2px;background:linear-gradient(90deg,#00a8ff,#0273ff 124px,#c043ff 221px,#ff32fc 252px,#ff1ac7 283px,#ff0597 327px,#ff007d 363px,#ff0056 449px,#ff003d 547px)"></div><div style="left:39px;top:222px;width:546px;height:2px;background:linear-gradient(90deg,#00a5ff,#0171ff 123px,#bf41ff 221px,#ff30fd 252px,#ff19c8 283px,#ff0397 328px,#ff006d 394px,#ff0049 499px,#ff003e 545px)"></div><div style="left:39px;top:224px;width:544px;height:2px;background:linear-gradient(90deg,#00a2ff,#036eff 124px,#c13eff 223px,#ff2efd 254px,#ff16c7 286px,#ff0297 331px,#ff006d 398px,#ff0048 504px,#ff0040 543px)"></div><div style="left:40px;top:226px;width:541px;height:2px;background:linear-gradient(90deg,#009fff,#026cff 123px,#c03cff 223px,#ff2bfc 255px,#ff15c7 287px,#ff0097 333px,#ff006d 401px,#ff0048 509px,#ff0041 540px)"></div><div style="left:41px;top:228px;width:539px;height:2px;background:linear-gradient(90deg,#009dff,#026aff 122px,#bf3aff 223px,#ff2afd 255px,#ff13c7 288px,#ff0097 334px,#ff006d 403px,#ff0048 512px,#ff0042 538px)"></div><div style="left:41px;top:230px;width:537px;height:2px;background:linear-gradient(90deg,#009aff,#0368ff 123px,#c138ff 225px,#ff27fd 257px,#ff11c7 290px,#ff0097 337px,#ff006c 407px,#ff0048 518px,#f04 536px)"></div><div style="left:42px;top:232px;width:534px;height:2px;background:linear-gradient(90deg,#0098ff,#0266ff 122px,#c036ff 225px,#ff25fc 258px,#ff0fc7 291px,#ff009a 334px,#ff0070 402px,#ff004b 509px,#ff0045 533px)"></div><div style="left:43px;top:234px;width:532px;height:2px;background:linear-gradient(90deg,#0095ff,#0264ff 121px,#bf34ff 225px,#ff23fd 258px,#ff0ec7 292px,#ff009d 332px,#ff0072 399px,#ff004d 504px,#ff0046 531px)"></div><div style="left:44px;top:236px;width:529px;height:2px;background:linear-gradient(90deg,#0093ff,#0162ff 120px,#bf32ff 225px,#ff21fd 259px,#ff0cc7 293px,#ff00a0 330px,#ff0075 396px,#ff004f 499px,#ff0048 528px)"></div><div style="left:44px;top:238px;width:528px;height:2px;background:linear-gradient(90deg,#0091ff,#0360ff 121px,#c030ff 227px,#ff1efc 261px,#ff0ac6 296px,#ff00a2 330px,#ff0076 396px,#ff0050 498px,#ff0049 527px)"></div><div style="left:45px;top:240px;width:525px;height:2px;background:linear-gradient(90deg,#008eff,#025eff 120px,#bf2eff 227px,#ff1dfd 261px,#ff09c7 296px,#ff00a5 328px,#ff0079 393px,#ff0053 493px,#ff004b 524px)"></div><div style="left:46px;top:242px;width:522px;height:2px;background:linear-gradient(90deg,#008cff,#025dff 119px,#bf2cff 227px,#ff1bfd 262px,#ff07c7 297px,#ff00a7 327px,#ff007b 391px,#ff0054 490px,#ff004c 521px)"></div><div style="left:47px;top:244px;width:520px;height:2px;background:linear-gradient(90deg,#0089ff,#035bff 119px,#c02aff 228px,#ff19fc 263px,#ff05c6 299px,#ff00a6 330px,#ff0079 396px,#ff0053 498px,#ff004d 519px)"></div><div style="left:48px;top:246px;width:517px;height:2px;background:linear-gradient(90deg,#0087ff,#0259ff 118px,#bf28ff 228px,#ff17fd 263px,#ff04c7 299px,#ff00a0 338px,#ff0074 408px,#ff004f 516px)"></div><div style="left:48px;top:248px;width:516px;height:2px;background:linear-gradient(90deg,#0085ff,#0257ff 118px,#bf26ff 229px,#ff15fd 265px,#ff03c7 301px,#ff0097 352px,#ff006d 428px,#ff0050 515px)"></div><div style="left:49px;top:250px;width:513px;height:2px;background:linear-gradient(90deg,#0083ff,#0256ff 117px,#c024ff 230px,#ff13fc 266px,#ff01c6 303px,#ff0096 355px,#ff006c 433px,#ff0052 512px)"></div><div style="left:50px;top:252px;width:510px;height:2px;background:linear-gradient(90deg,#0081ff,#0354ff 117px,#c122ff 231px,#ff12fd 266px,#ff00c7 303px,#ff0097 355px,#ff006c 433px,#ff0053 509px)"></div><div style="left:51px;top:254px;width:508px;height:2px;background:linear-gradient(90deg,#007eff,#0252ff 116px,#c121ff 231px,#ff10fd 267px,#ff00c7 304px,#ff0097 357px,#ff006c 436px,#f05 507px)"></div><div style="left:52px;top:256px;width:505px;height:2px;background:linear-gradient(90deg,#007cff,#0251ff 115px,#c01fff 231px,#ff0efc 268px,#ff00c7 305px,#ff0097 358px,#ff006d 437px,#ff0056 504px)"></div><div style="left:52px;top:258px;width:504px;height:2px;background:linear-gradient(90deg,#007bff,#034fff 116px,#c11dff 233px,#ff0cfd 269px,#f0c 303px,#ff009b 355px,#ff0070 432px,#ff0058 503px)"></div><div style="left:53px;top:260px;width:501px;height:2px;background:linear-gradient(90deg,#0079ff,#034dff 115px,#c11cff 233px,#ff0bfd 270px,#ff00cf 301px,#ff009e 352px,#ff0073 427px,#ff0059 500px)"></div><div style="left:54px;top:262px;width:498px;height:2px;background:linear-gradient(90deg,#0076ff,#024cff 114px,#c01aff 233px,#ff09fc 271px,#ff00d3 299px,#ff00a2 349px,#ff0076 423px,#ff005b 497px)"></div><div style="left:55px;top:264px;width:496px;height:2px;background:linear-gradient(90deg,#0074ff,#024bff 113px,#bf19ff 233px,#ff08fd 271px,#ff00d5 298px,#ff00a3 348px,#ff0078 421px,#ff005c 495px)"></div><div style="left:56px;top:266px;width:493px;height:2px;background:linear-gradient(90deg,#0072ff,#0349ff 113px,#c117ff 234px,#ff06fd 272px,#ff00d6 298px,#ff00a4 348px,#ff0078 421px,#ff005e 492px)"></div><div style="left:57px;top:268px;width:491px;height:2px;background:linear-gradient(90deg,#0071ff,#0248ff 112px,#c016ff 234px,#ff04fc 273px,#ff00cd 307px,#ff009c 361px,#ff0071 441px,#ff005f 490px)"></div><div style="left:57px;top:270px;width:489px;height:2px;background:linear-gradient(90deg,#006fff,#0246ff 112px,#bf14ff 235px,#ff03fd 274px,#ff00c7 314px,#ff0097 371px,#ff006c 456px,#ff0061 488px)"></div><div style="left:58px;top:272px;width:486px;height:2px;background:linear-gradient(90deg,#006dff,#0345ff 112px,#c113ff 236px,#ff01fd 275px,#ff00c7 315px,#ff0097 372px,#ff006d 457px,#ff0063 485px)"></div><div style="left:59px;top:274px;width:484px;height:2px;background:linear-gradient(90deg,#006bff,#0343ff 111px,#c011ff 236px,#ff00fc 276px,#ff00c6 317px,#ff0096 375px,#ff006c 461px,#ff0064 483px)"></div><div style="left:60px;top:276px;width:481px;height:2px;background:linear-gradient(90deg,#0069ff,#0242ff 110px,#bf10ff 236px,#ff00fd 276px,#ff00c7 317px,#ff0097 375px,#ff006d 461px,#f06 480px)"></div><div style="left:61px;top:278px;width:479px;height:2px;background:linear-gradient(90deg,#0068ff,#0241ff 109px,#bf0fff 236px,#ff00fd 277px,#ff00c7 318px,#ff0097 377px,#ff006c 464px,#ff0067 478px)"></div><div style="left:62px;top:280px;width:476px;height:2px;background:linear-gradient(90deg,#06f,#033fff 109px,#c00dff 237px,#f0f 276px,#ff00c7 319px,#ff0097 378px,#ff006c 466px,#ff0069 475px)"></div><div style="left:63px;top:282px;width:473px;height:2px;background:linear-gradient(90deg,#0064ff,#023eff 108px,#bf0cff 237px,#fa00ff 274px,#ff00f7 282px,#ff00c2 325px,#ff0092 387px,#ff006b 472px)"></div><div style="left:63px;top:284px;width:472px;height:2px;background:linear-gradient(90deg,#0063ff,#023dff 108px,#bf0bff 238px,#f600ff 273px,#ff00fb 281px,#ff00c5 324px,#ff0095 385px,#ff006d 471px)"></div><div style="left:64px;top:286px;width:469px;height:2px;background:linear-gradient(90deg,#0061ff,#033cff 108px,#c009ff 239px,#f200ff 271px,#ff00fc 281px,#ff00c6 324px,#ff0096 385px,#ff006f 468px)"></div><div style="left:65px;top:288px;width:467px;height:2px;background:linear-gradient(90deg,#005fff,#033bff 107px,#c107ff 240px,#ef00ff 270px,#ff00fc 282px,#ff00c6 325px,#ff0096 386px,#ff0070 466px)"></div><div style="left:66px;top:290px;width:464px;height:2px;background:linear-gradient(90deg,#005eff,#0239ff 106px,#c006ff 240px,#ef00ff 270px,#ff00fb 283px,#ff00c5 327px,#ff0095 389px,#ff0072 463px)"></div><div style="left:67px;top:292px;width:461px;height:2px;background:linear-gradient(90deg,#005cff,#0238ff 105px,#c005ff 240px,#e0f 270px,#ff00fc 283px,#ff00c6 327px,#ff0096 389px,#ff0074 460px)"></div><div style="left:68px;top:294px;width:459px;height:2px;background:linear-gradient(90deg,#005aff,#0337ff 105px,#c104ff 241px,#ff00fd 283px,#ff00c7 327px,#ff0097 389px,#ff0075 458px)"></div><div style="left:69px;top:296px;width:456px;height:2px;background:linear-gradient(90deg,#0059ff,#0236ff 104px,#c003ff 241px,#ff00fd 284px,#ff00c7 328px,#ff0097 391px,#f07 455px)"></div><div style="left:70px;top:298px;width:454px;height:2px;background:linear-gradient(90deg,#0057ff,#0235ff 103px,#c002ff 241px,#ff00fc 285px,#ff00c6 330px,#ff0096 394px,#ff0079 453px)"></div><div style="left:71px;top:300px;width:451px;height:2px;background:linear-gradient(90deg,#0056ff,#0334ff 103px,#c100ff 242px,#ff00fd 285px,#ff00c7 330px,#ff0097 394px,#ff007b 450px)"></div><div style="left:72px;top:302px;width:448px;height:2px;background:linear-gradient(90deg,#0054ff,#0333ff 102px,#c000ff 242px,#ff00fd 286px,#ff00c7 331px,#ff0097 395px,#ff007d 447px)"></div><div style="left:73px;top:304px;width:446px;height:2px;background:linear-gradient(90deg,#0053ff,#0232ff 101px,#c000ff 242px,#ff00fc 287px,#ff00c6 333px,#ff0096 398px,#ff007f 445px)"></div><div style="left:74px;top:306px;width:443px;height:2px;background:linear-gradient(90deg,#0051ff,#0231ff 100px,#bf00ff 242px,#ff00fd 287px,#ff00c7 333px,#ff0097 398px,#ff0081 442px)"></div><div style="left:74px;top:308px;width:441px;height:2px;background:linear-gradient(90deg,#0050ff,#032fff 101px,#bc00ff 241px,#ff00fd 289px,#ff00c7 335px,#ff0097 401px,#ff0083 440px)"></div><div style="left:75px;top:310px;width:439px;height:2px;background:linear-gradient(90deg,#004fff,#022eff 100px,#b900ff 239px,#ff00fc 290px,#ff00c6 337px,#ff0096 404px,#ff0085 438px)"></div><div style="left:76px;top:312px;width:436px;height:2px;background:linear-gradient(90deg,#004dff,#022eff 99px,#b400ff 236px,#ff00fd 290px,#ff00c7 337px,#ff0097 404px,#ff0087 435px)"></div><div style="left:77px;top:314px;width:434px;height:2px;background:linear-gradient(90deg,#004cff,#032cff 99px,#b100ff 234px,#ff00fd 291px,#ff00c6 339px,#ff0096 407px,#ff0089 433px)"></div><div style="left:78px;top:316px;width:431px;height:2px;background:linear-gradient(90deg,#004bff,#032bff 98px,#ad00ff 231px,#ff00fc 292px,#ff00c6 340px,#ff0096 408px,#ff008b 430px)"></div><div style="left:79px;top:318px;width:428px;height:2px;background:linear-gradient(90deg,#0049ff,#022bff 97px,#a0f 229px,#ff00fd 292px,#ff00c7 340px,#ff0097 408px,#ff008d 427px)"></div><div style="left:80px;top:320px;width:426px;height:2px;background:linear-gradient(90deg,#0048ff,#022aff 96px,#a600ff 226px,#ff00fd 293px,#ff00c6 342px,#ff0096 411px,#ff008f 425px)"></div><div style="left:81px;top:322px;width:423px;height:2px;background:linear-gradient(90deg,#0047ff,#0328ff 96px,#a300ff 224px,#ff00fc 294px,#ff00c6 343px,#ff0096 413px,#ff0091 422px)"></div><div style="left:82px;top:324px;width:421px;height:2px;background:linear-gradient(90deg,#0045ff,#0228ff 95px,#9f00ff 221px,#ff00fd 294px,#ff00c7 343px,#ff0097 413px,#ff0093 420px)"></div><div style="left:83px;top:326px;width:418px;height:2px;background:linear-gradient(90deg,#04f,#0227ff 94px,#9c00ff 219px,#ff00fd 295px,#ff00c6 345px,#ff0096 416px,#ff0095 417px)"></div><div style="left:84px;top:328px;width:415px;height:2px;background:linear-gradient(90deg,#0043ff,#0326ff 94px,#9800ff 216px,#ff00fc 296px,#ff00c6 346px,#ff0098 414px)"></div><div style="left:85px;top:330px;width:413px;height:2px;background:linear-gradient(90deg,#0041ff,#0325ff 93px,#9400ff 213px,#ff00fd 296px,#ff00c7 346px,#ff009a 412px)"></div><div style="left:86px;top:332px;width:410px;height:2px;background:linear-gradient(90deg,#0040ff,#0224ff 92px,#9100ff 211px,#ff00fd 297px,#ff00c6 348px,#ff009c 409px)"></div><div style="left:87px;top:334px;width:408px;height:2px;background:linear-gradient(90deg,#003fff,#0223ff 91px,#8e00ff 209px,#ff00fc 298px,#ff00c6 349px,#ff009e 407px)"></div><div style="left:88px;top:336px;width:405px;height:2px;background:linear-gradient(90deg,#003eff,#0322ff 91px,#8b00ff 206px,#ff00fc 299px,#ff00c6 351px,#ff00a1 404px)"></div><div style="left:89px;top:338px;width:402px;height:2px;background:linear-gradient(90deg,#003dff,#0322ff 90px,#8700ff 203px,#ff00fd 299px,#ff00c6 351px,#ff00a3 401px)"></div><div style="left:90px;top:340px;width:400px;height:2px;background:linear-gradient(90deg,#003bff,#0221ff 89px,#8400ff 201px,#ff00fc 300px,#ff00c6 352px,#ff00a5 399px)"></div><div style="left:91px;top:342px;width:397px;height:2px;background:linear-gradient(90deg,#003aff,#0320ff 89px,#8100ff 198px,#ff00fc 301px,#ff00c6 354px,#ff00a8 396px)"></div><div style="left:92px;top:344px;width:395px;height:2px;background:linear-gradient(90deg,#0039ff,#031fff 88px,#7e00ff 196px,#ff00fd 301px,#ff00c6 354px,#f0a 394px)"></div><div style="left:93px;top:346px;width:392px;height:2px;background:linear-gradient(90deg,#0038ff,#021eff 87px,#7b00ff 193px,#ff00fc 302px,#ff00c7 355px,#ff00ad 391px)"></div><div style="left:94px;top:348px;width:389px;height:2px;background:linear-gradient(90deg,#0037ff,#021eff 86px,#7900ff 191px,#ff00fc 303px,#ff00c6 357px,#ff00af 388px)"></div><div style="left:95px;top:350px;width:387px;height:2px;background:linear-gradient(90deg,#0036ff,#031dff 86px,#7500ff 188px,#ff00fd 303px,#ff00c7 357px,#ff00b1 386px)"></div><div style="left:96px;top:352px;width:384px;height:2px;background:linear-gradient(90deg,#0035ff,#031cff 85px,#7300ff 186px,#ff00fc 304px,#ff00c7 358px,#ff00b4 383px)"></div><div style="left:97px;top:354px;width:382px;height:2px;background:linear-gradient(90deg,#03f,#021bff 84px,#7000ff 183px,#ff00fc 305px,#ff00c6 360px,#ff00b6 381px)"></div><div style="left:98px;top:356px;width:379px;height:2px;background:linear-gradient(90deg,#0032ff,#031aff 84px,#6d00ff 181px,#ff00fd 305px,#ff00c7 360px,#ff00b9 378px)"></div><div style="left:99px;top:358px;width:376px;height:2px;background:linear-gradient(90deg,#0031ff,#031aff 83px,#6a00ff 178px,#ff00fc 306px,#ff00c7 361px,#ff00bc 375px)"></div><div style="left:100px;top:360px;width:374px;height:2px;background:linear-gradient(90deg,#0030ff,#0219ff 82px,#6800ff 176px,#ff00fc 307px,#ff00c6 363px,#ff00be 373px)"></div><div style="left:101px;top:362px;width:371px;height:2px;background:linear-gradient(90deg,#002fff,#0318ff 82px,#6500ff 173px,#ff00fd 307px,#ff00c7 363px,#ff00c1 370px)"></div><div style="left:102px;top:364px;width:369px;height:2px;background:linear-gradient(90deg,#002eff,#0317ff 81px,#6300ff 171px,#ff00fc 308px,#ff00c7 364px,#ff00c4 368px)"></div><div style="left:103px;top:366px;width:366px;height:2px;background:linear-gradient(90deg,#002dff,#0317ff 80px,#6000ff 168px,#ff00fc 309px,#ff00c7 365px)"></div><div style="left:104px;top:368px;width:363px;height:2px;background:linear-gradient(90deg,#002cff,#0216ff 79px,#5e00ff 166px,#ff00fd 309px,#ff00ca 362px)"></div><div style="left:105px;top:370px;width:361px;height:2px;background:linear-gradient(90deg,#002bff,#0315ff 79px,#5b00ff 163px,#ff00fc 310px,#f0c 360px)"></div><div style="left:106px;top:372px;width:358px;height:2px;background:linear-gradient(90deg,#002aff,#0315ff 78px,#5900ff 161px,#ff00fc 311px,#ff00cf 357px)"></div><div style="left:107px;top:374px;width:356px;height:2px;background:linear-gradient(90deg,#0029ff,#0214ff 77px,#5600ff 158px,#ff00fd 311px,#ff00d2 355px)"></div><div style="left:108px;top:376px;width:353px;height:2px;background:linear-gradient(90deg,#0028ff,#0313ff 77px,#5400ff 156px,#ff00fc 312px,#ff00d5 352px)"></div><div style="left:109px;top:378px;width:350px;height:2px;background:linear-gradient(90deg,#0027ff,#0313ff 76px,#5100ff 153px,#ff00fc 313px,#ff00d8 349px)"></div><div style="left:110px;top:380px;width:348px;height:2px;background:linear-gradient(90deg,#0026ff,#0312ff 75px,#4f00ff 151px,#ff00fd 313px,#ff00db 347px)"></div><div style="left:111px;top:382px;width:345px;height:2px;background:linear-gradient(90deg,#0025ff,#0212ff 74px,#4d00ff 148px,#ff00fc 314px,#ff00de 344px)"></div><div style="left:112px;top:384px;width:342px;height:2px;background:linear-gradient(90deg,#0025ff,#0311ff 74px,#4b00ff 146px,#ff00fc 315px,#ff00e2 341px)"></div><div style="left:113px;top:386px;width:340px;height:2px;background:linear-gradient(90deg,#0024ff,#0310ff 73px,#4900ff 144px,#ff00fd 315px,#ff00e4 339px)"></div><div style="left:114px;top:388px;width:337px;height:2px;background:linear-gradient(90deg,#0023ff,#0210ff 72px,#4600ff 141px,#ff00fc 316px,#ff00e8 336px)"></div><div style="left:115px;top:390px;width:335px;height:2px;background:linear-gradient(90deg,#02f,#030fff 72px,#4500ff 139px,#ff00fc 317px,#ff00eb 334px)"></div><div style="left:116px;top:392px;width:332px;height:2px;background:linear-gradient(90deg,#0021ff,#030eff 71px,#4200ff 136px,#ff00fd 317px,#f0e 331px)"></div><div style="left:117px;top:394px;width:329px;height:2px;background:linear-gradient(90deg,#0020ff,#030eff 70px,#4000ff 134px,#ff00fc 318px,#ff00f2 328px)"></div><div style="left:118px;top:396px;width:327px;height:2px;background:linear-gradient(90deg,#001fff,#020dff 69px,#3f00ff 132px,#ff00fc 319px,#ff00f5 326px)"></div><div style="left:119px;top:398px;width:324px;height:2px;background:linear-gradient(90deg,#001eff,#030cff 69px,#3c00ff 129px,#fc00ff 314px,#ff00f9 323px)"></div><div style="left:121px;top:400px;width:321px;height:2px;background:linear-gradient(90deg,#001dff,#030cff 67px,#3b00ff 126px,#fb00ff 313px,#ff00fb 320px)"></div><div style="left:122px;top:402px;width:318px;height:2px;background:linear-gradient(90deg,#001cff,#020bff 66px,#3900ff 124px,#f900ff 312px,#f0f 317px)"></div><div style="left:123px;top:404px;width:315px;height:2px;background:linear-gradient(90deg,#001cff,#030bff 66px,#3800ff 122px,#f700ff 311px,#fb00ff 314px)"></div><div style="left:124px;top:406px;width:313px;height:2px;background:linear-gradient(90deg,#001bff,#030aff 65px,#3600ff 120px,#f600ff 310px,#f800ff 312px)"></div><div style="left:125px;top:408px;width:310px;height:2px;background:linear-gradient(90deg,#001aff,#030aff 64px,#3400ff 117px,#f300ff 308px,#f400ff 309px)"></div><div style="left:126px;top:410px;width:308px;height:2px;background:linear-gradient(90deg,#0019ff,#0209ff 63px,#3200ff 115px,#f100ff 307px)"></div><div style="left:127px;top:412px;width:305px;height:2px;background:linear-gradient(90deg,#0018ff,#0309ff 63px,#3100ff 113px,#ed00ff 304px)"></div><div style="left:128px;top:414px;width:302px;height:2px;background:linear-gradient(90deg,#0018ff,#0308ff 62px,#2f00ff 111px,#ea00ff 301px)"></div><div style="left:129px;top:416px;width:300px;height:2px;background:linear-gradient(90deg,#0017ff,#0308ff 61px,#2f00ff 110px,#e700ff 299px)"></div><div style="left:131px;top:418px;width:296px;height:2px;background:linear-gradient(90deg,#0016ff,#0307ff 60px,#2d00ff 107px,#e300ff 295px)"></div><div style="left:132px;top:420px;width:294px;height:2px;background:linear-gradient(90deg,#0015ff,#0306ff 59px,#2e00ff 107px,#e100ff 293px)"></div><div style="left:133px;top:422px;width:291px;height:2px;background:linear-gradient(90deg,#0014ff,#0306ff 58px,#2c00ff 105px,#d0f 290px)"></div><div style="left:134px;top:424px;width:288px;height:2px;background:linear-gradient(90deg,#0014ff,#0206ff 57px,#2d00ff 105px,#da00ff 287px)"></div><div style="left:135px;top:426px;width:286px;height:2px;background:linear-gradient(90deg,#0013ff,#0305ff 57px,#3000ff 108px,#d700ff 285px)"></div><div style="left:136px;top:428px;width:283px;height:2px;background:linear-gradient(90deg,#0012ff,#0304ff 56px,#3200ff 110px,#d400ff 282px)"></div><div style="left:137px;top:430px;width:281px;height:2px;background:linear-gradient(90deg,#01f,#0304ff 55px,#3b00ff 120px,#d100ff 280px)"></div><div style="left:139px;top:432px;width:277px;height:2px;background:linear-gradient(90deg,#0010ff,#0303ff 54px,#7100ff 178px,#ce00ff 276px)"></div><div style="left:140px;top:434px;width:274px;height:2px;background:linear-gradient(90deg,#0010ff,#0303ff 53px,#c100ff 263px,#cb00ff 273px)"></div><div style="left:141px;top:436px;width:272px;height:2px;background:linear-gradient(90deg,#000fff,#0303ff 52px,#c100ff 263px,#c900ff 271px)"></div><div style="left:142px;top:438px;width:269px;height:2px;background:linear-gradient(90deg,#000eff,#0202ff 51px,#c000ff 263px,#c500ff 268px)"></div><div style="left:143px;top:440px;width:267px;height:2px;background:linear-gradient(90deg,#000eff,#0302ff 51px,#c100ff 264px,#c300ff 266px)"></div><div style="left:145px;top:442px;width:263px;height:2px;background:linear-gradient(90deg,#000dff,#0301ff 49px,#c000ff 262px)"></div><div style="left:146px;top:444px;width:260px;height:2px;background:linear-gradient(90deg,#000cff,#0301ff 48px,#bd00ff 259px)"></div><div style="left:147px;top:446px;width:258px;height:2px;background:linear-gradient(90deg,#000bff,#0300ff 48px,#b0f 257px)"></div><div style="left:148px;top:448px;width:255px;height:2px;background:linear-gradient(90deg,#000bff,#0300ff 47px,#b700ff 254px)"></div><div style="left:149px;top:450px;width:253px;height:2px;background:linear-gradient(90deg,#000aff,#0300ff 46px,#b500ff 252px)"></div><div style="left:151px;top:452px;width:249px;height:2px;background:linear-gradient(90deg,#0009ff,#0300ff 45px,#b200ff 248px)"></div><div style="left:152px;top:454px;width:246px;height:2px;background:linear-gradient(90deg,#0009ff,#0300ff 44px,#af00ff 245px)"></div><div style="left:153px;top:456px;width:244px;height:2px;background:linear-gradient(90deg,#0008ff,#0300ff 43px,#ad00ff 243px)"></div><div style="left:154px;top:458px;width:241px;height:2px;background:linear-gradient(90deg,#0007ff,#0300ff 43px,#a0f 240px)"></div><div style="left:156px;top:460px;width:237px;height:2px;background:linear-gradient(90deg,#0006ff,#0300ff 41px,#a800ff 236px)"></div><div style="left:157px;top:462px;width:235px;height:2px;background:linear-gradient(90deg,#0006ff,#0300ff 40px,#a600ff 234px)"></div><div style="left:158px;top:464px;width:232px;height:2px;background:linear-gradient(90deg,#0005ff,#0300ff 39px,#a300ff 231px)"></div><div style="left:160px;top:466px;width:229px;height:2px;background:linear-gradient(90deg,#0004ff,#0300ff 38px,#a100ff 228px)"></div><div style="left:161px;top:468px;width:226px;height:2px;background:linear-gradient(90deg,#0004ff,#0300ff 37px,#9e00ff 225px)"></div><div style="left:162px;top:470px;width:223px;height:2px;background:linear-gradient(90deg,#0003ff,#0300ff 36px,#9b00ff 222px)"></div><div style="left:163px;top:472px;width:221px;height:2px;background:linear-gradient(90deg,#0003ff,#0300ff 36px,#9a00ff 220px)"></div><div style="left:165px;top:474px;width:217px;height:2px;background:linear-gradient(90deg,#0002ff,#0300ff 34px,#9700ff 216px)"></div><div style="left:166px;top:476px;width:215px;height:2px;background:linear-gradient(90deg,#0001ff,#0300ff 33px,#9500ff 214px)"></div><div style="left:168px;top:478px;width:211px;height:2px;background:linear-gradient(90deg,#00f,#0300ff 32px,#9300ff 210px)"></div><div style="left:169px;top:480px;width:208px;height:2px;background:linear-gradient(90deg,#00f,#0300ff 31px,#9000ff 207px)"></div><div style="left:170px;top:482px;width:206px;height:2px;background:linear-gradient(90deg,#00f,#0300ff 30px,#8e00ff 205px)"></div><div style="left:172px;top:484px;width:202px;height:2px;background:linear-gradient(90deg,#00f,#0400ff 29px,#8c00ff 201px)"></div><div style="left:173px;top:486px;width:200px;height:2px;background:linear-gradient(90deg,#00f,#0300ff 28px,#8a00ff 199px)"></div><div style="left:174px;top:488px;width:197px;height:2px;background:linear-gradient(90deg,#00f,#0300ff 27px,#8700ff 196px)"></div><div style="left:176px;top:490px;width:193px;height:2px;background:linear-gradient(90deg,#00f,#0400ff 26px,#8500ff 192px)"></div><div style="left:177px;top:492px;width:191px;height:2px;background:linear-gradient(90deg,#00f,#0300ff 25px,#8300ff 190px)"></div><div style="left:179px;top:494px;width:187px;height:2px;background:linear-gradient(90deg,#00f,#0400ff 24px,#8100ff 186px)"></div><div style="left:180px;top:496px;width:185px;height:2px;background:linear-gradient(90deg,#00f,#0400ff 23px,#7f00ff 184px)"></div><div style="left:182px;top:498px;width:181px;height:2px;background:linear-gradient(90deg,#00f,#0400ff 21px,#7d00ff 180px)"></div><div style="left:183px;top:500px;width:178px;height:2px;background:linear-gradient(90deg,#00f,#0400ff 21px,#7b00ff 177px)"></div><div style="left:185px;top:502px;width:175px;height:2px;background:linear-gradient(90deg,#00f,#0500ff 20px,#7900ff 174px)"></div><div style="left:186px;top:504px;width:172px;height:2px;background:linear-gradient(90deg,#00f,#0400ff 19px,#70f 171px)"></div><div style="left:188px;top:506px;width:169px;height:2px;background:linear-gradient(90deg,#00f,#0500ff 18px,#7500ff 168px)"></div><div style="left:189px;top:508px;width:166px;height:2px;background:linear-gradient(90deg,#00f,#0500ff 17px,#7300ff 165px)"></div><div style="left:191px;top:510px;width:162px;height:2px;background:linear-gradient(90deg,#00f,#0600ff 17px,#7100ff 161px)"></div><div style="left:192px;top:512px;width:160px;height:2px;background:linear-gradient(90deg,#00f,#0600ff 16px,#6f00ff 159px)"></div><div style="left:194px;top:514px;width:156px;height:2px;background:linear-gradient(90deg,#00f,#0a00ff 21px,#6d00ff 155px)"></div><div style="left:196px;top:516px;width:153px;height:2px;background:linear-gradient(90deg,#00f,#2c00ff 66px,#6c00ff 152px)"></div><div style="left:197px;top:518px;width:150px;height:2px;background:linear-gradient(90deg,#00f,#6900ff 149px)"></div><div style="left:199px;top:520px;width:146px;height:2px;background:linear-gradient(90deg,#00f,#6700ff 145px)"></div><div style="left:201px;top:522px;width:143px;height:2px;background:linear-gradient(90deg,#00f,#60f 142px)"></div><div style="left:202px;top:524px;width:140px;height:2px;background:linear-gradient(90deg,#00f,#6400ff 139px)"></div><div style="left:204px;top:526px;width:137px;height:2px;background:linear-gradient(90deg,#0100ff,#6200ff 136px)"></div><div style="left:206px;top:528px;width:133px;height:2px;background:linear-gradient(90deg,#0300ff,#6000ff 132px)"></div><div style="left:208px;top:530px;width:129px;height:2px;background:linear-gradient(90deg,#0400ff,#5e00ff 128px)"></div><div style="left:210px;top:532px;width:126px;height:2px;background:linear-gradient(90deg,#0500ff,#5d00ff 125px)"></div><div style="left:211px;top:534px;width:123px;height:2px;background:linear-gradient(90deg,#0500ff,#5b00ff 122px)"></div><div style="left:213px;top:536px;width:120px;height:2px;background:linear-gradient(90deg,#0700ff,#5a00ff 119px)"></div><div style="left:215px;top:538px;width:116px;height:2px;background:linear-gradient(90deg,#0800ff,#5800ff 115px)"></div><div style="left:217px;top:540px;width:112px;height:2px;background:linear-gradient(90deg,#0900ff,#5600ff 111px)"></div><div style="left:219px;top:542px;width:109px;height:2px;background:linear-gradient(90deg,#0a00ff,#5400ff 108px)"></div><div style="left:221px;top:544px;width:105px;height:2px;background:linear-gradient(90deg,#0b00ff,#5300ff 104px)"></div><div style="left:223px;top:546px;width:101px;height:2px;background:linear-gradient(90deg,#0c00ff,#5100ff 100px)"></div><div style="left:225px;top:548px;width:98px;height:2px;background:linear-gradient(90deg,#0d00ff,#4f00ff 97px)"></div><div style="left:227px;top:550px;width:94px;height:2px;background:linear-gradient(90deg,#0e00ff,#4e00ff 93px)"></div><div style="left:229px;top:552px;width:91px;height:2px;background:linear-gradient(90deg,#1000ff,#4c00ff 90px)"></div><div style="left:231px;top:554px;width:87px;height:2px;background:linear-gradient(90deg,#10f,#4a00ff 86px)"></div><div style="left:233px;top:556px;width:83px;height:2px;background:linear-gradient(90deg,#1200ff,#4900ff 82px)"></div><div style="left:235px;top:558px;width:80px;height:2px;background:linear-gradient(90deg,#1300ff,#4700ff 79px)"></div><div style="left:237px;top:560px;width:76px;height:2px;background:linear-gradient(90deg,#1400ff,#4600ff 75px)"></div><div style="left:239px;top:562px;width:73px;height:2px;background:linear-gradient(90deg,#1500ff,#4500ff 72px)"></div><div style="left:241px;top:564px;width:69px;height:2px;background:linear-gradient(90deg,#1600ff,#4300ff 68px)"></div><div style="left:243px;top:566px;width:65px;height:2px;background:linear-gradient(90deg,#1700ff,#4100ff 64px)"></div><div style="left:245px;top:568px;width:62px;height:2px;background:linear-gradient(90deg,#1800ff,#4000ff 61px)"></div><div style="left:247px;top:570px;width:58px;height:2px;background:linear-gradient(90deg,#1900ff,#3e00ff 57px)"></div><div style="left:249px;top:572px;width:55px;height:2px;background:linear-gradient(90deg,#1a00ff,#3d00ff 54px)"></div><div style="left:251px;top:574px;width:51px;height:2px;background:linear-gradient(90deg,#1b00ff,#3b00ff 50px)"></div><div style="left:253px;top:576px;width:47px;height:2px;background:linear-gradient(90deg,#1c00ff,#3a00ff 46px)"></div><div style="left:255px;top:578px;width:44px;height:2px;background:linear-gradient(90deg,#1d00ff,#3900ff 43px)"></div><div style="left:257px;top:580px;width:40px;height:2px;background:linear-gradient(90deg,#1e00ff,#3700ff 39px)"></div><div style="left:259px;top:582px;width:37px;height:2px;background:linear-gradient(90deg,#1f00ff,#3600ff 36px)"></div><div style="left:262px;top:584px;width:32px;height:2px;background:linear-gradient(90deg,#2100ff,#3400ff 31px)"></div><div style="left:264px;top:586px;width:28px;height:2px;background:linear-gradient(90deg,#20f,#30f 27px)"></div><div style="left:267px;top:588px;width:24px;height:2px;background:linear-gradient(90deg,#2300ff,#3200ff 23px)"></div><div style="left:269px;top:590px;width:20px;height:2px;background:linear-gradient(90deg,#2400ff,#3000ff 19px)"></div><div style="left:272px;top:592px;width:16px;height:2px;background:linear-gradient(90deg,#2600ff,#2f00ff 15px)"></div><div style="left:274px;top:594px;width:12px;height:2px;background:linear-gradient(90deg,#2700ff,#2e00ff 11px)"></div><div style="left:0;top:0;width:657.7px;height:613px;background:rgba(0,0,0,.4);clip-path:polygon(evenodd,0 0,100% 0,100% 100%,0 100%,0 0,493.47px 78.09px,136.5px 37.56px,191.78px 451.47px,493.47px 78.09px)"></div></div></div>
<div style="left:1681.3px;top:566.3px;width:223px;height:183.6px;background:#2e2e2e"></div>
<div style="left:1683.2px;top:568.2px;width:219.2px;height:179.8px;background:#8c8c8c"></div>
<div class="g" style="left:1684.6px;top:569.6px;width:216.4px;height:177px;overflow:hidden"><div style="left:0;top:0px;width:218px;height:2px;background:linear-gradient(90deg,#b1ff00 0px,#fffd00 176px,#ffeb00 217px)"></div><div style="left:0;top:2px;width:218px;height:2px;background:linear-gradient(90deg,#b2ff00 0px,#fffd00 175px,#ffea00 217px)"></div><div style="left:0;top:4px;width:218px;height:2px;background:linear-gradient(90deg,#b2ff00 0px,#fffd00 173px,#ffea00 217px)"></div><div style="left:0;top:6px;width:218px;height:2px;background:linear-gradient(90deg,#b3ff00 0px,#fffd00 172px,#ffe900 217px)"></div><div style="left:0;top:8px;width:218px;height:2px;background:linear-gradient(90deg,#b4ff00 0px,#fffd00 170px,#ffe800 217px)"></div><div style="left:0;top:10px;width:218px;height:2px;background:linear-gradient(90deg,#b4ff00 0px,#fffd00 169px,#ffe800 217px)"></div><div style="left:0;top:12px;width:218px;height:2px;background:linear-gradient(90deg,#b5ff00 0px,#fffd00 167px,#ffe700 217px)"></div><div style="left:0;top:14px;width:218px;height:2px;background:linear-gradient(90deg,#b5ff00 0px,#fffd00 166px,#ffe600 217px)"></div><div style="left:0;top:16px;width:218px;height:2px;background:linear-gradient(90deg,#b6ff00 0px,#fffd00 164px,#ffe600 217px)"></div><div style="left:0;top:18px;width:218px;height:2px;background:linear-gradient(90deg,#b6ff00 0px,#fffd00 163px,#ffe500 217px)"></div><div style="left:0;top:20px;width:218px;height:2px;background:linear-gradient(90deg,#b7ff00 0px,#fffd00 161px,#ffe400 217px)"></div><div style="left:0;top:22px;width:218px;height:2px;background:linear-gradient(90deg,#b7ff01 0px,#fffd00 160px,#ffe400 217px)"></div><div style="left:0;top:24px;width:218px;height:2px;background:linear-gradient(90deg,#b8ff01 0px,#fffd00 158px,#ffe300 217px)"></div><div style="left:0;top:26px;width:218px;height:2px;background:linear-gradient(90deg,#b8ff01 0px,#fffd00 157px,#ffe300 217px)"></div><div style="left:0;top:28px;width:218px;height:2px;background:linear-gradient(90deg,#b9ff02 0px,#fffd00 155px,#ffe200 217px)"></div><div style="left:0;top:30px;width:218px;height:2px;background:linear-gradient(90deg,#baff02 0px,#fffd00 154px,#ffe100 217px)"></div><div style="left:0;top:32px;width:218px;height:2px;background:linear-gradient(90deg,#baff02 0px,#fffd00 152px,#ffe100 217px)"></div><div style="left:0;top:34px;width:218px;height:2px;background:linear-gradient(90deg,#bbff03 0px,#f3ff00 123px,#fffd00 152px,#ffe000 217px)"></div><div style="left:0;top:36px;width:218px;height:2px;background:linear-gradient(90deg,#bbff03 0px,#e8ff00 98px,#fffd00 150px,#ffdf00 217px)"></div><div style="left:0;top:38px;width:218px;height:2px;background:linear-gradient(90deg,#bcff03 0px,#e4ff00 88px,#fffd00 148px,#ffdf00 217px)"></div><div style="left:0;top:40px;width:218px;height:2px;background:linear-gradient(90deg,#bcff03 0px,#e3ff00 84px,#fffd00 147px,#ffde00 217px)"></div><div style="left:0;top:42px;width:218px;height:2px;background:linear-gradient(90deg,#bdff04 0px,#e2ff00 82px,#fffd00 145px,#fd0 217px)"></div><div style="left:0;top:44px;width:218px;height:2px;background:linear-gradient(90deg,#beff04 0px,#e3ff00 81px,#fffd00 144px,#fd0 217px)"></div><div style="left:0;top:46px;width:218px;height:2px;background:linear-gradient(90deg,#beff04 0px,#e4ff00 82px,#fffd00 142px,#ffdc00 217px)"></div><div style="left:0;top:48px;width:218px;height:2px;background:linear-gradient(90deg,#bfff05 0px,#e5ff00 83px,#fffd00 141px,#ffdc00 217px)"></div><div style="left:0;top:50px;width:218px;height:2px;background:linear-gradient(90deg,#bfff05 0px,#e6ff00 84px,#fffd00 139px,#ffdb00 217px)"></div><div style="left:0;top:52px;width:218px;height:2px;background:linear-gradient(90deg,#c0ff05 0px,#e8ff00 86px,#fffd00 138px,#ffda00 217px)"></div><div style="left:0;top:54px;width:218px;height:2px;background:linear-gradient(90deg,#c1ff06 0px,#e9ff00 88px,#fffd00 136px,#ffda00 217px)"></div><div style="left:0;top:56px;width:218px;height:2px;background:linear-gradient(90deg,#c1ff06 0px,#ebff00 90px,#fffd00 135px,#ffd900 217px)"></div><div style="left:0;top:58px;width:218px;height:2px;background:linear-gradient(90deg,#c2ff06 0px,#edff00 92px,#fffd00 134px,#ffd900 217px)"></div><div style="left:0;top:60px;width:218px;height:2px;background:linear-gradient(90deg,#c2ff07 0px,#ef0 94px,#fffd00 132px,#ffd800 217px)"></div><div style="left:0;top:62px;width:218px;height:2px;background:linear-gradient(90deg,#c3ff07 0px,#f0ff00 97px,#fffd00 131px,#ffd700 217px)"></div><div style="left:0;top:64px;width:218px;height:2px;background:linear-gradient(90deg,#c4ff07 0px,#f2ff00 99px,#fffd00 129px,#ffd700 217px)"></div><div style="left:0;top:66px;width:218px;height:2px;background:linear-gradient(90deg,#c4ff08 0px,#f4ff00 102px,#fffd00 128px,#ffd600 217px)"></div><div style="left:0;top:68px;width:218px;height:2px;background:linear-gradient(90deg,#c5ff08 0px,#f6ff00 105px,#fffd00 127px,#ffd500 217px)"></div><div style="left:0;top:70px;width:218px;height:2px;background:linear-gradient(90deg,#c5ff08 0px,#f8ff00 107px,#fffc00 126px,#ffd500 217px)"></div><div style="left:0;top:72px;width:218px;height:2px;background:linear-gradient(90deg,#c6ff09 0px,#faff00 110px,#fffc00 126px,#ffd400 217px)"></div><div style="left:0;top:74px;width:218px;height:2px;background:linear-gradient(90deg,#c7ff09 0px,#fdff00 113px,#fff100 147px,#ffd400 217px)"></div><div style="left:0;top:76px;width:218px;height:2px;background:linear-gradient(90deg,#c7ff09 0px,#ff0 116px,#ffd300 217px)"></div><div style="left:0;top:78px;width:218px;height:2px;background:linear-gradient(90deg,#c8ff0a 0px,#fffd00 118px,#ffd200 217px)"></div><div style="left:0;top:80px;width:218px;height:2px;background:linear-gradient(90deg,#c8ff0a 0px,#fffd00 117px,#ffd200 217px)"></div><div style="left:0;top:82px;width:218px;height:2px;background:linear-gradient(90deg,#c9ff0a 0px,#fffd00 115px,#ffd100 217px)"></div><div style="left:0;top:84px;width:218px;height:2px;background:linear-gradient(90deg,#caff0b 0px,#fffd00 114px,#ffd100 217px)"></div><div style="left:0;top:86px;width:218px;height:2px;background:linear-gradient(90deg,#caff0b 0px,#fffd00 112px,#ffd000 217px)"></div><div style="left:0;top:88px;width:218px;height:2px;background:linear-gradient(90deg,#cbff0b 0px,#fffd00 111px,#ffcf00 217px)"></div><div style="left:0;top:90px;width:218px;height:2px;background:linear-gradient(90deg,#cbff0c 0px,#fffd00 109px,#ffcf00 217px)"></div><div style="left:0;top:92px;width:218px;height:2px;background:linear-gradient(90deg,#ccff0c 0px,#fffd01 108px,#ffce00 217px)"></div><div style="left:0;top:94px;width:218px;height:2px;background:linear-gradient(90deg,#cdff0c 0px,#fffd01 106px,#ffce00 217px)"></div><div style="left:0;top:96px;width:218px;height:2px;background:linear-gradient(90deg,#cdff0d 0px,#fffd02 105px,#ffcd00 217px)"></div><div style="left:0;top:98px;width:218px;height:2px;background:linear-gradient(90deg,#ceff0d 0px,#fffd02 104px,#fc0 217px)"></div><div style="left:0;top:100px;width:218px;height:2px;background:linear-gradient(90deg,#cfff0d 0px,#fffd03 102px,#ffd300 197px,#fc0 217px)"></div><div style="left:0;top:102px;width:218px;height:2px;background:linear-gradient(90deg,#cfff0e 0px,#fffd03 101px,#ffd900 181px,#ffcb00 217px)"></div><div style="left:0;top:104px;width:218px;height:2px;background:linear-gradient(90deg,#d0ff0e 0px,#fffd04 99px,#ffdb00 174px,#ffcb00 217px)"></div><div style="left:0;top:106px;width:218px;height:2px;background:linear-gradient(90deg,#d1ff0e 0px,#fffd04 98px,#ffdb00 172px,#ffca00 217px)"></div><div style="left:0;top:108px;width:218px;height:2px;background:linear-gradient(90deg,#d1ff0f 0px,#fffd05 96px,#ffdb00 172px,#ffca00 217px)"></div><div style="left:0;top:110px;width:218px;height:2px;background:linear-gradient(90deg,#d2ff0f 0px,#fffd05 95px,#ffda00 173px,#ffc900 217px)"></div><div style="left:0;top:112px;width:218px;height:2px;background:linear-gradient(90deg,#d3ff0f 0px,#fffd06 93px,#ffd900 174px,#ffc800 217px)"></div><div style="left:0;top:114px;width:218px;height:2px;background:linear-gradient(90deg,#d3ff10 0px,#fffd06 92px,#ffd700 176px,#ffc800 217px)"></div><div style="left:0;top:116px;width:218px;height:2px;background:linear-gradient(90deg,#d4ff10 0px,#fffd07 90px,#ffd600 178px,#ffc700 217px)"></div><div style="left:0;top:118px;width:218px;height:2px;background:linear-gradient(90deg,#d5ff10 0px,#fffd07 89px,#ffd400 180px,#ffc700 217px)"></div><div style="left:0;top:120px;width:218px;height:2px;background:linear-gradient(90deg,#d5ff11 0px,#fffd08 87px,#ffd300 183px,#ffc600 217px)"></div><div style="left:0;top:122px;width:218px;height:2px;background:linear-gradient(90deg,#d6ff11 0px,#fffd08 86px,#ffd100 185px,#ffc500 217px)"></div><div style="left:0;top:124px;width:218px;height:2px;background:linear-gradient(90deg,#d6ff11 0px,#fffd09 84px,#ffcf00 188px,#ffc500 217px)"></div><div style="left:0;top:126px;width:218px;height:2px;background:linear-gradient(90deg,#d7ff12 0px,#fffd09 83px,#ffce00 191px,#ffc400 217px)"></div><div style="left:0;top:128px;width:218px;height:2px;background:linear-gradient(90deg,#d8ff12 0px,#fffd0a 81px,#ffcd00 192px,#ffc400 217px)"></div><div style="left:0;top:130px;width:218px;height:2px;background:linear-gradient(90deg,#d9ff13 0px,#fffd0a 80px,#fc0 191px,#ffc300 217px)"></div><div style="left:0;top:132px;width:218px;height:2px;background:linear-gradient(90deg,#d9ff13 0px,#fffd0b 78px,#ffcd00 189px,#ffc300 217px)"></div><div style="left:0;top:134px;width:218px;height:2px;background:linear-gradient(90deg,#daff13 0px,#fffd0b 77px,#fc0 188px,#ffc200 217px)"></div><div style="left:0;top:136px;width:218px;height:2px;background:linear-gradient(90deg,#dbff14 0px,#fffd0c 75px,#ffcd00 185px,#ffc100 217px)"></div><div style="left:0;top:138px;width:218px;height:2px;background:linear-gradient(90deg,#dbff14 0px,#fffd0c 74px,#ffcd00 184px,#ffc100 217px)"></div><div style="left:0;top:140px;width:218px;height:2px;background:linear-gradient(90deg,#dcff14 0px,#fffd0d 72px,#ffcd01 182px,#ffc000 217px)"></div><div style="left:0;top:142px;width:218px;height:2px;background:linear-gradient(90deg,#ddff15 0px,#fffd0d 71px,#ffcd01 181px,#ffc000 217px)"></div><div style="left:0;top:144px;width:218px;height:2px;background:linear-gradient(90deg,#ddff15 0px,#fffd0e 69px,#ffcd02 179px,#ffbf00 217px)"></div><div style="left:0;top:146px;width:218px;height:2px;background:linear-gradient(90deg,#deff15 0px,#fffd0e 68px,#ffcc02 178px,#ffbf00 217px)"></div><div style="left:0;top:148px;width:218px;height:2px;background:linear-gradient(90deg,#dfff16 0px,#fffd0f 67px,#ffcc02 177px,#ffbe00 217px)"></div><div style="left:0;top:150px;width:218px;height:2px;background:linear-gradient(90deg,#dfff16 0px,#fffd0f 65px,#ffcd03 174px,#ffbd00 217px)"></div><div style="left:0;top:152px;width:218px;height:2px;background:linear-gradient(90deg,#e0ff17 0px,#fffd10 64px,#ffcc03 173px,#ffbd00 217px)"></div><div style="left:0;top:154px;width:218px;height:2px;background:linear-gradient(90deg,#e1ff17 0px,#fffd11 62px,#ffcd04 171px,#ffbc00 217px)"></div><div style="left:0;top:156px;width:218px;height:2px;background:linear-gradient(90deg,#e2ff17 0px,#fffd11 61px,#ffcc04 170px,#ffbc00 217px)"></div><div style="left:0;top:158px;width:218px;height:2px;background:linear-gradient(90deg,#e2ff18 0px,#fffd12 59px,#ffcd05 168px,#fb0 217px)"></div><div style="left:0;top:160px;width:218px;height:2px;background:linear-gradient(90deg,#e3ff18 0px,#fffd12 58px,#ffcc05 167px,#fb0 217px)"></div><div style="left:0;top:162px;width:218px;height:2px;background:linear-gradient(90deg,#e4ff18 0px,#fffd13 56px,#ffcc06 165px,#ffba01 217px)"></div><div style="left:0;top:164px;width:218px;height:2px;background:linear-gradient(90deg,#e4ff19 0px,#fffd13 55px,#ffcc06 164px,#ffb901 217px)"></div><div style="left:0;top:166px;width:218px;height:2px;background:linear-gradient(90deg,#e5ff19 0px,#fffd14 53px,#ffcd06 161px,#ffb901 217px)"></div><div style="left:0;top:168px;width:218px;height:2px;background:linear-gradient(90deg,#e6ff1a 0px,#fffd14 52px,#ffcc07 160px,#ffb801 217px)"></div><div style="left:0;top:170px;width:218px;height:2px;background:linear-gradient(90deg,#e7ff1a 0px,#fffd15 50px,#ffcd07 158px,#ffb802 217px)"></div><div style="left:0;top:172px;width:218px;height:2px;background:linear-gradient(90deg,#e7ff1a 0px,#fffd15 49px,#ffcc08 157px,#ffb702 217px)"></div><div style="left:0;top:174px;width:218px;height:2px;background:linear-gradient(90deg,#e8ff1b 0px,#fffd16 47px,#ffcd08 155px,#ffb702 217px)"></div><div style="left:0;top:176px;width:218px;height:1px;background:linear-gradient(90deg,#e9ff1b 0px,#fffd16 46px,#ffcc09 154px,#ffb602 217px)"></div><div style="left:0;top:0;width:218px;height:178px;background:rgba(0,0,0,.4);clip-path:polygon(0 0,100% 0,100% 159.66px,0 18.17px)"></div></div>
<div style="left:848px;top:812.1px;width:743px;height:35.4px;background:linear-gradient(#343434 0,#2b2b2b 51%,#171717 52%,#0f0f0f 100%)"></div>
<div style="left:848px;top:812.1px;width:20px;height:35.4px;background:#000"></div>
<div style="left:868px;top:847.5px;width:723px;height:32.1px;background:linear-gradient(#3d3d3d,#424242)"></div>
<div style="left:848px;top:847.5px;width:20px;height:32.1px;background:linear-gradient(#262626,#343434)"></div>
<div style="left:868px;top:879.6px;width:723px;height:32.3px;background:linear-gradient(#848484,#808080)"></div>
<div style="left:848px;top:879.6px;width:20px;height:32.3px;background:linear-gradient(#262626,#343434)"></div>
<div style="left:868px;top:911.9px;width:723px;height:31.85px;background:linear-gradient(#3d3d3d,#424242)"></div>
<div style="left:848px;top:911.9px;width:20px;height:31.85px;background:linear-gradient(#262626,#343434)"></div>
<div style="left:868px;top:943.75px;width:723px;height:32.25px;background:linear-gradient(#848484,#808080)"></div>
<div style="left:848px;top:943.75px;width:20px;height:32.25px;background:linear-gradient(#262626,#343434)"></div>
<div style="left:868px;top:976px;width:723px;height:32.3px;background:linear-gradient(#3d3d3d,#424242)"></div>
<div style="left:848px;top:976px;width:20px;height:32.3px;background:linear-gradient(#262626,#343434)"></div>
<div style="left:868px;top:1008.3px;width:723px;height:32.3px;background:linear-gradient(#848484,#808080)"></div>
<div style="left:848px;top:1008.3px;width:20px;height:32.3px;background:linear-gradient(#262626,#343434)"></div>
<div style="left:868px;top:1040.6px;width:723px;height:32.2px;background:linear-gradient(#3d3d3d,#424242)"></div>
<div style="left:848px;top:1040.6px;width:20px;height:32.2px;background:linear-gradient(#262626,#343434)"></div>
<div style="left:868px;top:1072.8px;width:723px;height:32.2px;background:linear-gradient(#848484,#808080)"></div>
<div style="left:848px;top:1072.8px;width:20px;height:32.2px;background:linear-gradient(#262626,#343434)"></div>
<div style="left:200px;top:1107.7px;width:1720px;height:62.3px;background:linear-gradient(#4a4a4a 0,#3a3a3a 35%,#242424 100%)"></div>
<div style="left:200px;top:1107.7px;width:812px;height:62.3px;background:#2a2a2a"></div>
<div style="left:201.2px;top:1108px;width:45px;height:63px;background:linear-gradient(#a2a2a2 0,#8a8a8a 12%,#6c6c6c 55%,#4c4c4c 100%);border-radius:5px 5px 0 0"></div>
<div style="left:206px;top:1134.2px;width:35.3px;height:29.8px;background:#ffff00;border-radius:3px;box-shadow:0 0 0 1px rgba(40,40,40,.35)"></div>
<div style="left:252.3px;top:1108px;width:149.7px;height:63px;background:linear-gradient(#a2a2a2 0,#8a8a8a 12%,#6c6c6c 55%,#4c4c4c 100%);border-radius:5px 5px 0 0"></div>
<div style="left:257.6px;top:1113.3px;width:139.5px;height:35.7px;background:#c0c0a2;border-radius:3px;box-shadow:inset 0 1px 1px rgba(0,0,0,.3)"></div>
<div style="left:404px;top:1108px;width:149.7px;height:63px;background:linear-gradient(#a2a2a2 0,#8a8a8a 12%,#6c6c6c 55%,#4c4c4c 100%);border-radius:5px 5px 0 0"></div>
<div style="left:409.3px;top:1113.3px;width:139.5px;height:35.7px;background:#c0c084;border-radius:3px;box-shadow:inset 0 1px 1px rgba(0,0,0,.3)"></div>
<div style="left:556px;top:1108px;width:149.7px;height:63px;background:linear-gradient(#a2a2a2 0,#8a8a8a 12%,#6c6c6c 55%,#4c4c4c 100%);border-radius:5px 5px 0 0"></div>
<div style="left:561.3px;top:1113.3px;width:139.5px;height:35.7px;background:#c0c066;border-radius:3px;box-shadow:inset 0 1px 1px rgba(0,0,0,.3)"></div>
<div style="left:708.2px;top:1108px;width:149.7px;height:63px;background:linear-gradient(#a2a2a2 0,#8a8a8a 12%,#6c6c6c 55%,#4c4c4c 100%);border-radius:5px 5px 0 0"></div>
<div style="left:713.5px;top:1113.3px;width:139.5px;height:35.7px;background:#c0c04c;border-radius:3px;box-shadow:inset 0 1px 1px rgba(0,0,0,.3)"></div>
<div style="left:860px;top:1108px;width:149.7px;height:63px;background:linear-gradient(#1a1a1a 0,#262626 30%,#343434 100%);border-radius:5px 5px 0 0"></div>
<div style="left:865.3px;top:1113.3px;width:139.5px;height:35.7px;background:#c0c000;border-radius:3px;box-shadow:inset 0 1px 1px rgba(0,0,0,.3)"></div>
<div style="left:1646px;top:1108px;width:44.4px;height:30px;background:linear-gradient(#9a9a9a 0,#808080 50%,#686868 100%);border-radius:4px 4px 0 0"></div>
<div style="left:1691.2px;top:1108px;width:44.4px;height:30px;background:linear-gradient(#9a9a9a 0,#808080 50%,#686868 100%);border-radius:4px 4px 0 0"></div>
<div style="left:1736.4px;top:1108px;width:44.4px;height:30px;background:linear-gradient(#9a9a9a 0,#808080 50%,#686868 100%);border-radius:4px 4px 0 0"></div>
<div style="left:1781.6px;top:1108px;width:44.4px;height:30px;background:linear-gradient(#9a9a9a 0,#808080 50%,#686868 100%);border-radius:4px 4px 0 0"></div>
<div style="left:1826.8px;top:1108px;width:44.4px;height:30px;background:linear-gradient(#9a9a9a 0,#808080 50%,#686868 100%);border-radius:4px 4px 0 0"></div>
<div style="left:1597px;top:1127px;width:47.6px;height:44px;background:linear-gradient(#8c8c8c 0,#6e6e6e 50%,#555 100%);border-radius:5px 5px 0 0"></div>
<div style="left:1646px;top:1139px;width:136px;height:29.6px;background:linear-gradient(#b4b4b4 0,#9c9c9c 30%,#7a7a7a 70%,#666 100%);border-radius:4px"></div>
<div style="left:1782.6px;top:1139px;width:135.8px;height:29.6px;background:linear-gradient(#b4b4b4 0,#9c9c9c 30%,#7a7a7a 70%,#666 100%);border-radius:4px"></div>
<svg width="1920" height="1170" viewBox="0 0 1920 1170">
<defs><linearGradient id="icg" x1="0" y1="0" x2="1" y2="1"><stop offset="0" stop-color="#3c3"/><stop offset=".35" stop-color="#fc0"/><stop offset=".6" stop-color="#e22"/><stop offset=".8" stop-color="#a2f"/><stop offset="1" stop-color="#22f"/></linearGradient>
<linearGradient id="lgb" x1="0" y1="0" x2="0" y2="1"><stop offset="0" stop-color="#c01018"/><stop offset="1" stop-color="#e84840"/></linearGradient>
<linearGradient id="sb1" x1="0" y1="0" x2="0" y2="1"><stop offset="0" stop-color="#4a4a4a"/><stop offset="1" stop-color="#646464"/></linearGradient>
<radialGradient id="sb2" cx=".4" cy=".35" r=".7"><stop offset="0" stop-color="#c8c8c8"/><stop offset="1" stop-color="#7a7a7a"/></radialGradient>
<linearGradient id="tbc" x1="0" y1="0" x2="0" y2="1"><stop offset="0" stop-color="#404040"/><stop offset="1" stop-color="#5a5a5a"/></linearGradient>
<clipPath id="cl1"><rect x="847" y="116" width="348" height="27.4"/></clipPath>
<linearGradient id="b0"><stop offset="0" stop-color="#d44444"/><stop offset=".18" stop-color="#c81010"/><stop offset=".6" stop-color="#c81010"/><stop offset="1" stop-color="#640808"/></linearGradient>
<linearGradient id="b1"><stop offset="0" stop-color="#44d444"/><stop offset=".18" stop-color="#10c810"/><stop offset=".6" stop-color="#10c810"/><stop offset="1" stop-color="#086408"/></linearGradient>
<linearGradient id="b2"><stop offset="0" stop-color="#4444d4"/><stop offset=".18" stop-color="#1010c8"/><stop offset=".6" stop-color="#1010c8"/><stop offset="1" stop-color="#080864"/></linearGradient>
<linearGradient id="b3"><stop offset="0" stop-color="#44d4d4"/><stop offset=".18" stop-color="#10c8c8"/><stop offset=".6" stop-color="#10c8c8"/><stop offset="1" stop-color="#086464"/></linearGradient>
<linearGradient id="b4"><stop offset="0" stop-color="#d444d4"/><stop offset=".18" stop-color="#c810c8"/><stop offset=".6" stop-color="#c810c8"/><stop offset="1" stop-color="#640864"/></linearGradient>
<linearGradient id="b5"><stop offset="0" stop-color="#d4d444"/><stop offset=".18" stop-color="#c8c810"/><stop offset=".6" stop-color="#c8c810"/><stop offset="1" stop-color="#646408"/></linearGradient>
<linearGradient id="b6"><stop offset="0" stop-color="#d46c6c"/><stop offset=".18" stop-color="#c84343"/><stop offset=".6" stop-color="#c84343"/><stop offset="1" stop-color="#642121"/></linearGradient>
<linearGradient id="b7"><stop offset="0" stop-color="#6cd46c"/><stop offset=".18" stop-color="#43c843"/><stop offset=".6" stop-color="#43c843"/><stop offset="1" stop-color="#216421"/></linearGradient>
<linearGradient id="b8"><stop offset="0" stop-color="#6c6cd4"/><stop offset=".18" stop-color="#4343c8"/><stop offset=".6" stop-color="#4343c8"/><stop offset="1" stop-color="#212164"/></linearGradient>
<linearGradient id="b9"><stop offset="0" stop-color="#6cd4d4"/><stop offset=".18" stop-color="#43c8c8"/><stop offset=".6" stop-color="#43c8c8"/><stop offset="1" stop-color="#216464"/></linearGradient>
<linearGradient id="b10"><stop offset="0" stop-color="#d46cd4"/><stop offset=".18" stop-color="#c843c8"/><stop offset=".6" stop-color="#c843c8"/><stop offset="1" stop-color="#642164"/></linearGradient>
<linearGradient id="b11"><stop offset="0" stop-color="#d4d46c"/><stop offset=".18" stop-color="#c8c843"/><stop offset=".6" stop-color="#c8c843"/><stop offset="1" stop-color="#646421"/></linearGradient>
<linearGradient id="b12"><stop offset="0" stop-color="#d48585"/><stop offset=".18" stop-color="#c86262"/><stop offset=".6" stop-color="#c86262"/><stop offset="1" stop-color="#643131"/></linearGradient>
<linearGradient id="b13"><stop offset="0" stop-color="#85d485"/><stop offset=".18" stop-color="#62c862"/><stop offset=".6" stop-color="#62c862"/><stop offset="1" stop-color="#316431"/></linearGradient>
<linearGradient id="b14"><stop offset="0" stop-color="#8585d4"/><stop offset=".18" stop-color="#6262c8"/><stop offset=".6" stop-color="#6262c8"/><stop offset="1" stop-color="#313164"/></linearGradient>
<linearGradient id="b15"><stop offset="0" stop-color="#85d4d4"/><stop offset=".18" stop-color="#62c8c8"/><stop offset=".6" stop-color="#62c8c8"/><stop offset="1" stop-color="#316464"/></linearGradient>
<linearGradient id="b16"><stop offset="0" stop-color="#d485d4"/><stop offset=".18" stop-color="#c862c8"/><stop offset=".6" stop-color="#c862c8"/><stop offset="1" stop-color="#643164"/></linearGradient>
<linearGradient id="b17"><stop offset="0" stop-color="#d4d485"/><stop offset=".18" stop-color="#c8c862"/><stop offset=".6" stop-color="#c8c862"/><stop offset="1" stop-color="#646431"/></linearGradient>
<linearGradient id="b18"><stop offset="0" stop-color="#d49a9a"/><stop offset=".18" stop-color="#c87e7e"/><stop offset=".6" stop-color="#c87e7e"/><stop offset="1" stop-color="#643f3f"/></linearGradient>
<linearGradient id="b19"><stop offset="0" stop-color="#9ad49a"/><stop offset=".18" stop-color="#7ec87e"/><stop offset=".6" stop-color="#7ec87e"/><stop offset="1" stop-color="#3f643f"/></linearGradient>
<linearGradient id="b20"><stop offset="0" stop-color="#9a9ad4"/><stop offset=".18" stop-color="#7e7ec8"/><stop offset=".6" stop-color="#7e7ec8"/><stop offset="1" stop-color="#3f3f64"/></linearGradient>
<linearGradient id="b21"><stop offset="0" stop-color="#9ad4d4"/><stop offset=".18" stop-color="#7ec8c8"/><stop offset=".6" stop-color="#7ec8c8"/><stop offset="1" stop-color="#3f6464"/></linearGradient>
<linearGradient id="b22"><stop offset="0" stop-color="#d49ad4"/><stop offset=".18" stop-color="#c87ec8"/><stop offset=".6" stop-color="#c87ec8"/><stop offset="1" stop-color="#643f64"/></linearGradient>
<linearGradient id="b23"><stop offset="0" stop-color="#d4d49a"/><stop offset=".18" stop-color="#c8c87e"/><stop offset=".6" stop-color="#c8c87e"/><stop offset="1" stop-color="#64643f"/></linearGradient>
<linearGradient id="b24"><stop offset="0" stop-color="#d4b7b7"/><stop offset=".18" stop-color="#c8a3a3"/><stop offset=".6" stop-color="#c8a3a3"/><stop offset="1" stop-color="#645151"/></linearGradient>
<linearGradient id="b25"><stop offset="0" stop-color="#b7d4b7"/><stop offset=".18" stop-color="#a3c8a3"/><stop offset=".6" stop-color="#a3c8a3"/><stop offset="1" stop-color="#516451"/></linearGradient>
<linearGradient id="b26"><stop offset="0" stop-color="#b7b7d4"/><stop offset=".18" stop-color="#a3a3c8"/><stop offset=".6" stop-color="#a3a3c8"/><stop offset="1" stop-color="#515164"/></linearGradient>
<linearGradient id="b27"><stop offset="0" stop-color="#b7d4d4"/><stop offset=".18" stop-color="#a3c8c8"/><stop offset=".6" stop-color="#a3c8c8"/><stop offset="1" stop-color="#516464"/></linearGradient>
<linearGradient id="b28"><stop offset="0" stop-color="#d4b7d4"/><stop offset=".18" stop-color="#c8a3c8"/><stop offset=".6" stop-color="#c8a3c8"/><stop offset="1" stop-color="#645164"/></linearGradient>
<linearGradient id="b29"><stop offset="0" stop-color="#d4d4b7"/><stop offset=".18" stop-color="#c8c8a3"/><stop offset=".6" stop-color="#c8c8a3"/><stop offset="1" stop-color="#646451"/></linearGradient>
<linearGradient id="bw"><stop offset="0" stop-color="#ffffff"/><stop offset=".18" stop-color="#f4f4f4"/><stop offset=".6" stop-color="#f4f4f4"/><stop offset="1" stop-color="#707070"/></linearGradient>
<linearGradient id="yb" x1="0" y1="0" x2="0" y2="1"><stop offset="0" stop-color="#cccc00"/><stop offset=".08" stop-color="#c4c400"/><stop offset=".55" stop-color="#c0c000"/><stop offset="1" stop-color="#5e5e00"/></linearGradient>
<linearGradient id="rr" x1="0" y1="0" x2="0" y2="1"><stop offset="0" stop-color="#ff4848"/><stop offset=".12" stop-color="#ff0000"/><stop offset=".45" stop-color="#f40000"/><stop offset="1" stop-color="#8a0000"/></linearGradient>
<linearGradient id="rg" x1="0" y1="0" x2="0" y2="1"><stop offset="0" stop-color="#008c00"/><stop offset=".5" stop-color="#008000"/><stop offset="1" stop-color="#005a00"/></linearGradient>
<linearGradient id="rb" x1="0" y1="0" x2="0" y2="1"><stop offset="0" stop-color="#5050ff"/><stop offset=".08" stop-color="#0000ff"/><stop offset=".55" stop-color="#0000f4"/><stop offset="1" stop-color="#000078"/></linearGradient>
<linearGradient id="upc" x1="0" y1="0" x2="0" y2="1"><stop offset="0" stop-color="#6a6a6a"/><stop offset="1" stop-color="#a4a4a4"/></linearGradient>
<linearGradient id="nbc" x1="0" y1="0" x2="0" y2="1"><stop offset="0" stop-color="#7c7c7c"/><stop offset="1" stop-color="#9a9a9a"/></linearGradient></defs>
<circle cx="9.8" cy="11" r="8" fill="#111"/><circle cx="9.8" cy="11" r="7.6" fill="none" stroke="url(#icg)" stroke-width="1.3"/>
<text transform="translate(4.26 13.6) scale(0.950 1)" font-size="7.5" fill="#fff" font-weight="bold">CM</text>
<text transform="translate(23.3 16) scale(0.967 1)" font-size="12" fill="#000">CalMAN 2019 CalMAN Ultimate for Business 213 Days Remaining</text>
<path d="M1799.5 10.5h10M1844.5 7.5h7v7h-7zM1846.5 7.5v-2h7v7h-2M1890 5.5l10 10M1900 5.5l-10 10" fill="none" stroke="#111" stroke-width="1"/>
<text transform="translate(13.2 47.6) scale(1.09 1)" font-size="28.8" font-weight="bold" fill="#fff" letter-spacing="1.5" style="filter:drop-shadow(0 1px 1px #700)">CalMAN</text>
<circle cx="166" cy="37.5" r="10" fill="url(#lgb)"/><path d="M161.2 35.3h9.6l-4.8 5.4z" fill="#fff"/>
<circle cx="18.7" cy="72.3" r="9.6" fill="#5b5b5b"/><circle cx="18.7" cy="72" r="9.3" fill="url(#sb1)"/><circle cx="18.5" cy="71.5" r="3.6" fill="url(#sb2)"/>
<circle cx="181" cy="72.3" r="9.6" fill="url(#sb1)"/><path d="M183.6 66.8v10.2l-5.6-5.1z" fill="#fff"/>
<text transform="translate(9 101) scale(0.938 1)" font-size="13" fill="#e8e8e8">SDR Toolkit</text>
<text transform="translate(29 123.8) scale(0.970 1)" font-size="11" fill="#fff" font-weight="bold">Welcome</text>
<path d="M19.5 122l3-3v3z" fill="#444"/>
<text transform="translate(42 139.8) scale(0.970 1)" font-size="11" fill="#f2f2f2">Welcome</text>
<text transform="translate(42 153.8) scale(0.970 1)" font-size="11" fill="#f2f2f2">Options</text>
<text transform="translate(29 168.8) scale(0.970 1)" font-size="11" fill="#fff" font-weight="bold">Analysis</text>
<path d="M19.5 167l3-3v3z" fill="#444"/>
<text transform="translate(42 184.8) scale(0.970 1)" font-size="11" fill="#f2f2f2">Dynamic Range</text>
<text transform="translate(42 198.8) scale(0.970 1)" font-size="11" fill="#f2f2f2">Grayscale - 2pt</text>
<text transform="translate(42 213.8) scale(0.970 1)" font-size="11" fill="#f2f2f2">Grayscale - Multi</text>
<text transform="translate(42 228.8) scale(0.970 1)" font-size="11" fill="#f2f2f2">Color Gamut</text>
<text transform="translate(42 243.1) scale(0.970 1)" font-size="11" fill="#f2f2f2">3D LUT</text>
<text transform="translate(42 257.8) scale(0.970 1)" font-size="11" fill="#f2f2f2">ColorChecker</text>
<rect x="41" y="262" width="91" height="14" fill="#e4e4e4"/>
<text transform="translate(42 272.5) scale(0.970 1)" font-size="11" fill="#222">Saturation Sweeps</text>
<text transform="translate(42 287.1) scale(0.970 1)" font-size="11" fill="#f2f2f2">Luminance Sweeps</text>
<text transform="translate(42 301.8) scale(0.970 1)" font-size="11" fill="#f2f2f2">Screen Uniformity</text>
<text transform="translate(42 316.8) scale(0.970 1)" font-size="11" fill="#f2f2f2">Screen Angularity</text>
<text transform="translate(42 330.8) scale(0.970 1)" font-size="11" fill="#f2f2f2">Screen Stability</text>
<text transform="translate(42 345.8) scale(0.970 1)" font-size="11" fill="#f2f2f2">Spectral Power Dist.</text>
<text transform="translate(206.5 78) scale(1.014 1)" font-size="11.5" fill="#e0e0e0">History 1</text>
<circle cx="274" cy="75" r="9.3" fill="#3a3a3a"/>
<text transform="translate(270.5 79.6) scale(1.000 1)" font-size="12" fill="#888">+</text>
<circle cx="1515.5" cy="73" r="9.5" fill="url(#tbc)"/><path d="M1511 71.2h9l-4.5 4.6z" fill="#fff"/>
<text transform="translate(1437 70) scale(0.964 1)" font-size="11" fill="#fff">X-Rite i1Pro 2</text>
<text transform="translate(1437 84) scale(1.010 1)" font-size="11" fill="#fff">Direct View</text>
<circle cx="1555" cy="73" r="13" fill="#fff"/><circle cx="1555" cy="73" r="12" fill="#0000f0"/>
<text transform="translate(1547.47 76.5) scale(0.950 1)" font-size="9.5" fill="#fff" font-weight="bold">236</text>
<circle cx="1690.5" cy="73" r="9.5" fill="url(#tbc)"/><path d="M1686 71.2h9l-4.5 4.6z" fill="#fff"/>
<text transform="translate(1585.4 70) scale(0.947 1)" font-size="11" fill="#fff">Source</text>
<circle cx="1840" cy="73" r="9.5" fill="url(#tbc)"/><path d="M1835.5 71.2h9l-4.5 4.6z" fill="#fff"/>
<text transform="translate(1721.4 70) scale(0.992 1)" font-size="11" fill="#fff">Direct Display Control</text>
<circle cx="1876.3" cy="72.3" r="10.3" fill="#5a5a5a"/><circle cx="1876.3" cy="72.3" r="4.6" fill="none" stroke="#ddd" stroke-width="2.4"/><circle cx="1876.3" cy="72.3" r="6.6" fill="none" stroke="#ddd" stroke-width="2.6" stroke-dasharray="2.6 2.58"/>
<circle cx="1907" cy="72.3" r="10.3" fill="#5a5a5a"/><path d="M1909.8 66.6v11.4l-6.2-5.7z" fill="#fff"/>
<text transform="translate(208.7 150) scale(0.816 1)" font-size="50" fill="#f0f0f0" stroke="#f0f0f0" stroke-width="0.9">Saturation Sweeps</text>
<text transform="translate(776.7 140.6) scale(0.753 1)" font-size="26.2" fill="#f0f0f0" stroke="#f0f0f0" stroke-width="0.5">Levels:</text>
<g clip-path="url(#cl1)">
<text transform="translate(851.7 142.3) scale(0.751 1)" font-size="21" fill="#f4f4f4" stroke="#f4f4f4" stroke-width="0.3">20% Sweeps</text>
</g>
<path d="M1180.9 128.9h9.2l-4.6 6.7z" fill="#000"/>
<text transform="translate(327.7 216.5) scale(0.793 1)" font-size="25.6" fill="#f0f0f0" stroke="#f0f0f0" stroke-width="0.5">dE Formula:</text>
<text transform="translate(452.3 217.8) scale(0.809 1)" font-size="20" fill="#f4f4f4" stroke="#f4f4f4" stroke-width="0.3">2000</text>
<path d="M570.6 205.6h9.2l-4.6 6.7z" fill="#000"/>
<rect x="245.2" y="264" width="321.2" height="481.6" fill="#242424"/>
<line x1="287.8" y1="264" x2="287.8" y2="745.6" stroke="#929292" stroke-width="1.2"/>
<line x1="330.4" y1="264" x2="330.4" y2="745.6" stroke="#929292" stroke-width="1.2"/>
<line x1="373" y1="264" x2="373" y2="745.6" stroke="#929292" stroke-width="1.2"/>
<line x1="415.6" y1="264" x2="415.6" y2="745.6" stroke="#929292" stroke-width="1.2"/>
<line x1="458.2" y1="264" x2="458.2" y2="745.6" stroke="#929292" stroke-width="1.2"/>
<line x1="500.8" y1="264" x2="500.8" y2="745.6" stroke="#929292" stroke-width="1.2"/>
<line x1="543.4" y1="264" x2="543.4" y2="745.6" stroke="#929292" stroke-width="1.2"/>
<path d="M245.2 264V745.6H566.4V264" fill="none" stroke="#929292" stroke-width="1.3"/>
<line x1="244.6" y1="264" x2="567" y2="264" stroke="#a0a0a0" stroke-width="2.2"/>
<line x1="244.6" y1="745.6" x2="567" y2="745.6" stroke="#a0a0a0" stroke-width="1.8"/>
<line x1="245.2" y1="745.6" x2="245.2" y2="753.6" stroke="#ccc" stroke-width="1.3"/>
<text transform="translate(240.08 773) scale(0.800 1)" font-size="18.5" fill="#dcdcdc" stroke="#dcdcdc" stroke-width="0.3">0</text>
<line x1="287.8" y1="745.6" x2="287.8" y2="753.6" stroke="#ccc" stroke-width="1.3"/>
<text transform="translate(282.68 773) scale(0.800 1)" font-size="18.5" fill="#dcdcdc" stroke="#dcdcdc" stroke-width="0.3">2</text>
<line x1="330.4" y1="745.6" x2="330.4" y2="753.6" stroke="#ccc" stroke-width="1.3"/>
<text transform="translate(325.28 773) scale(0.800 1)" font-size="18.5" fill="#dcdcdc" stroke="#dcdcdc" stroke-width="0.3">4</text>
<line x1="373" y1="745.6" x2="373" y2="753.6" stroke="#ccc" stroke-width="1.3"/>
<text transform="translate(367.88 773) scale(0.800 1)" font-size="18.5" fill="#dcdcdc" stroke="#dcdcdc" stroke-width="0.3">6</text>
<line x1="415.6" y1="745.6" x2="415.6" y2="753.6" stroke="#ccc" stroke-width="1.3"/>
<text transform="translate(410.48 773) scale(0.800 1)" font-size="18.5" fill="#dcdcdc" stroke="#dcdcdc" stroke-width="0.3">8</text>
<line x1="458.2" y1="745.6" x2="458.2" y2="753.6" stroke="#ccc" stroke-width="1.3"/>
<text transform="translate(448.97 773) scale(0.800 1)" font-size="18.5" fill="#dcdcdc" stroke="#dcdcdc" stroke-width="0.3">10</text>
<line x1="500.8" y1="745.6" x2="500.8" y2="753.6" stroke="#ccc" stroke-width="1.3"/>
<text transform="translate(491.57 773) scale(0.800 1)" font-size="18.5" fill="#dcdcdc" stroke="#dcdcdc" stroke-width="0.3">12</text>
<line x1="543.4" y1="745.6" x2="543.4" y2="753.6" stroke="#ccc" stroke-width="1.3"/>
<text transform="translate(534.17 773) scale(0.800 1)" font-size="18.5" fill="#dcdcdc" stroke="#dcdcdc" stroke-width="0.3">14</text>
<line x1="239" y1="264" x2="245.2" y2="264" stroke="#dedede" stroke-width="1.9"/>
<line x1="239" y1="345.6" x2="245.2" y2="345.6" stroke="#dedede" stroke-width="1.9"/>
<line x1="239" y1="425.4" x2="245.2" y2="425.4" stroke="#dedede" stroke-width="1.9"/>
<line x1="239" y1="504.8" x2="245.2" y2="504.8" stroke="#dedede" stroke-width="1.9"/>
<line x1="239" y1="584.4" x2="245.2" y2="584.4" stroke="#dedede" stroke-width="1.9"/>
<line x1="239" y1="666.7" x2="245.2" y2="666.7" stroke="#dedede" stroke-width="1.9"/>
<line x1="239" y1="745.6" x2="245.2" y2="745.6" stroke="#dedede" stroke-width="1.9"/>
<text transform="translate(346 258) scale(0.792 1)" font-size="18.8" fill="#dcdcdc" stroke="#dcdcdc" stroke-width="0.3">DeltaE 2000</text>
<text transform="translate(206.64 312.4) scale(0.775 1)" font-size="19" fill="#dcdcdc" stroke="#dcdcdc" stroke-width="0.3">100%</text>
<text transform="translate(214.83 391.4) scale(0.775 1)" font-size="19" fill="#dcdcdc" stroke="#dcdcdc" stroke-width="0.3">80%</text>
<text transform="translate(214.83 472.9) scale(0.775 1)" font-size="19" fill="#dcdcdc" stroke="#dcdcdc" stroke-width="0.3">60%</text>
<text transform="translate(214.83 552.9) scale(0.775 1)" font-size="19" fill="#dcdcdc" stroke="#dcdcdc" stroke-width="0.3">40%</text>
<text transform="translate(214.83 632.9) scale(0.775 1)" font-size="19" fill="#dcdcdc" stroke="#dcdcdc" stroke-width="0.3">20%</text>
<text transform="translate(219.73 713.9) scale(0.775 1)" font-size="19" fill="#dcdcdc" stroke="#dcdcdc" stroke-width="0.3">100</text>
<rect x="245.2" y="272.5" width="31" height="8" fill="#000"/><rect x="245.9" y="274" width="29.2" height="5" fill="url(#b0)"/>
<rect x="245.2" y="281.1" width="18.1" height="8" fill="#000"/><rect x="245.9" y="282.6" width="16.3" height="5" fill="url(#b1)"/>
<rect x="245.2" y="289.6" width="36.2" height="8" fill="#000"/><rect x="245.9" y="291.1" width="34.4" height="5" fill="url(#b2)"/>
<rect x="245.2" y="298" width="30" height="8" fill="#000"/><rect x="245.9" y="299.5" width="28.2" height="5" fill="url(#b3)"/>
<rect x="245.2" y="306.5" width="38.9" height="8" fill="#000"/><rect x="245.9" y="308" width="37.1" height="5" fill="url(#b4)"/>
<rect x="245.2" y="315" width="36.85" height="8" fill="#000"/><rect x="245.9" y="316.5" width="35.05" height="5" fill="url(#b5)"/>
<rect x="245.2" y="352.1" width="30" height="8" fill="#000"/><rect x="245.9" y="353.6" width="28.2" height="5" fill="url(#b6)"/>
<rect x="245.2" y="360.9" width="16.6" height="8" fill="#000"/><rect x="245.9" y="362.4" width="14.8" height="5" fill="url(#b7)"/>
<rect x="245.2" y="369" width="28.5" height="8" fill="#000"/><rect x="245.9" y="370.5" width="26.7" height="5" fill="url(#b8)"/>
<rect x="245.2" y="377.75" width="30.6" height="8" fill="#000"/><rect x="245.9" y="379.25" width="28.8" height="5" fill="url(#b9)"/>
<rect x="245.2" y="386.1" width="33.7" height="8" fill="#000"/><rect x="245.9" y="387.6" width="31.9" height="5" fill="url(#b10)"/>
<rect x="245.2" y="394.8" width="43.7" height="8" fill="#000"/><rect x="245.9" y="396.3" width="41.9" height="5" fill="url(#b11)"/>
<rect x="245.2" y="431.8" width="33.9" height="8" fill="#000"/><rect x="245.9" y="433.3" width="32.1" height="5" fill="url(#b12)"/>
<rect x="245.2" y="440.5" width="15.6" height="8" fill="#000"/><rect x="245.9" y="442" width="13.8" height="5" fill="url(#b13)"/>
<rect x="245.2" y="448.8" width="25.6" height="8" fill="#000"/><rect x="245.9" y="450.3" width="23.8" height="5" fill="url(#b14)"/>
<rect x="245.2" y="457.5" width="29.6" height="8" fill="#000"/><rect x="245.9" y="459" width="27.8" height="5" fill="url(#b15)"/>
<rect x="245.2" y="465.8" width="38.6" height="8" fill="#000"/><rect x="245.9" y="467.3" width="36.8" height="5" fill="url(#b16)"/>
<rect x="245.2" y="474.5" width="45.6" height="8" fill="#000"/><rect x="245.9" y="476" width="43.8" height="5" fill="url(#b17)"/>
<rect x="245.2" y="513.8" width="40" height="8" fill="#000"/><rect x="245.9" y="515.3" width="38.2" height="5" fill="url(#b18)"/>
<rect x="245.2" y="522" width="16.6" height="8" fill="#000"/><rect x="245.9" y="523.5" width="14.8" height="5" fill="url(#b19)"/>
<rect x="245.2" y="530.9" width="25.4" height="8" fill="#000"/><rect x="245.9" y="532.4" width="23.6" height="5" fill="url(#b20)"/>
<rect x="245.2" y="538.8" width="28.5" height="8" fill="#000"/><rect x="245.9" y="540.3" width="26.7" height="5" fill="url(#b21)"/>
<rect x="245.2" y="547.8" width="40.8" height="8" fill="#000"/><rect x="245.9" y="549.3" width="39" height="5" fill="url(#b22)"/>
<rect x="245.2" y="556.1" width="47.9" height="8" fill="#000"/><rect x="245.9" y="557.6" width="46.1" height="5" fill="url(#b23)"/>
<rect x="245.2" y="593.6" width="46.85" height="8" fill="#000"/><rect x="245.9" y="595.1" width="45.05" height="5" fill="url(#b24)"/>
<rect x="245.2" y="601.9" width="25.4" height="8" fill="#000"/><rect x="245.9" y="603.4" width="23.6" height="5" fill="url(#b25)"/>
<rect x="245.2" y="610.5" width="33.7" height="8" fill="#000"/><rect x="245.9" y="612" width="31.9" height="5" fill="url(#b26)"/>
<rect x="245.2" y="618.8" width="33.7" height="8" fill="#000"/><rect x="245.9" y="620.3" width="31.9" height="5" fill="url(#b27)"/>
<rect x="245.2" y="627.3" width="46.85" height="8" fill="#000"/><rect x="245.9" y="628.8" width="45.05" height="5" fill="url(#b28)"/>
<rect x="245.2" y="636.1" width="57.9" height="8" fill="#000"/><rect x="245.9" y="637.6" width="56.1" height="5" fill="url(#b29)"/>
<rect x="245.2" y="723.8" width="96.9" height="8" fill="#000"/><rect x="245.9" y="725.3" width="95.1" height="5" fill="url(#bw)"/>
<rect x="620.6" y="197" width="148.6" height="352.4" fill="#242424"/>
<line x1="620.6" y1="255.92" x2="769.2" y2="255.92" stroke="#929292" stroke-width="1.2"/>
<line x1="620.6" y1="314.83" x2="769.2" y2="314.83" stroke="#929292" stroke-width="1.2"/>
<line x1="620.6" y1="373.75" x2="769.2" y2="373.75" stroke="#929292" stroke-width="1.2"/>
<line x1="620.6" y1="432.67" x2="769.2" y2="432.67" stroke="#929292" stroke-width="1.2"/>
<line x1="620.6" y1="491.58" x2="769.2" y2="491.58" stroke="#929292" stroke-width="1.2"/>
<path d="M620.6 197V549.4H769.2V197" fill="none" stroke="#929292" stroke-width="1.3"/>
<line x1="620" y1="197.3" x2="769.8" y2="197.3" stroke="#8e8e8e" stroke-width="3.5"/>
<line x1="620" y1="549.4" x2="769.8" y2="549.4" stroke="#949494" stroke-width="1.8"/>
<line x1="620.6" y1="549.4" x2="620.6" y2="556.4" stroke="#ccc" stroke-width="1.3"/>
<line x1="769.2" y1="549.4" x2="769.2" y2="556.4" stroke="#ccc" stroke-width="1.3"/>
<line x1="615" y1="197.2" x2="620.6" y2="197.2" stroke="#dedede" stroke-width="1.9"/>
<text transform="translate(597.92 205) scale(0.800 1)" font-size="18.3" fill="#dcdcdc" stroke="#dcdcdc" stroke-width="0.3">15</text>
<line x1="615" y1="256.12" x2="620.6" y2="256.12" stroke="#dedede" stroke-width="1.9"/>
<text transform="translate(597.92 263.92) scale(0.800 1)" font-size="18.3" fill="#dcdcdc" stroke="#dcdcdc" stroke-width="0.3">10</text>
<line x1="615" y1="315.03" x2="620.6" y2="315.03" stroke="#dedede" stroke-width="1.9"/>
<text transform="translate(606.06 322.83) scale(0.800 1)" font-size="18.3" fill="#dcdcdc" stroke="#dcdcdc" stroke-width="0.3">5</text>
<line x1="615" y1="373.95" x2="620.6" y2="373.95" stroke="#dedede" stroke-width="1.9"/>
<text transform="translate(606.06 381.75) scale(0.800 1)" font-size="18.3" fill="#dcdcdc" stroke="#dcdcdc" stroke-width="0.3">0</text>
<line x1="615" y1="432.87" x2="620.6" y2="432.87" stroke="#dedede" stroke-width="1.9"/>
<text transform="translate(601.18 440.67) scale(0.800 1)" font-size="18.3" fill="#dcdcdc" stroke="#dcdcdc" stroke-width="0.3">-5</text>
<line x1="615" y1="491.78" x2="620.6" y2="491.78" stroke="#dedede" stroke-width="1.9"/>
<text transform="translate(593.04 499.58) scale(0.800 1)" font-size="18.3" fill="#dcdcdc" stroke="#dcdcdc" stroke-width="0.3">-10</text>
<line x1="615" y1="549.6" x2="620.6" y2="549.6" stroke="#dedede" stroke-width="1.9"/>
<text transform="translate(593.04 557.5) scale(0.800 1)" font-size="18.3" fill="#dcdcdc" stroke="#dcdcdc" stroke-width="0.3">-15</text>
<text transform="translate(659.46 190) scale(0.800 1)" font-size="18.8" fill="#dcdcdc" stroke="#dcdcdc" stroke-width="0.3">DeltaL</text>
<text transform="translate(675.97 568.9) scale(0.800 1)" font-size="18.5" fill="#dcdcdc" stroke="#dcdcdc" stroke-width="0.3">100%</text>
<rect x="635.8" y="369.8" width="118.8" height="4" fill="#000"/>
<rect x="823.3" y="197" width="149.8" height="352.4" fill="#242424"/>
<line x1="823.3" y1="255.92" x2="973.1" y2="255.92" stroke="#929292" stroke-width="1.2"/>
<line x1="823.3" y1="314.83" x2="973.1" y2="314.83" stroke="#929292" stroke-width="1.2"/>
<line x1="823.3" y1="373.75" x2="973.1" y2="373.75" stroke="#929292" stroke-width="1.2"/>
<line x1="823.3" y1="432.67" x2="973.1" y2="432.67" stroke="#929292" stroke-width="1.2"/>
<line x1="823.3" y1="491.58" x2="973.1" y2="491.58" stroke="#929292" stroke-width="1.2"/>
<path d="M823.3 197V549.4H973.1V197" fill="none" stroke="#929292" stroke-width="1.3"/>
<line x1="822.7" y1="197.3" x2="973.7" y2="197.3" stroke="#8e8e8e" stroke-width="3.5"/>
<line x1="822.7" y1="549.4" x2="973.7" y2="549.4" stroke="#949494" stroke-width="1.8"/>
<line x1="823.3" y1="549.4" x2="823.3" y2="556.4" stroke="#ccc" stroke-width="1.3"/>
<line x1="973.1" y1="549.4" x2="973.1" y2="556.4" stroke="#ccc" stroke-width="1.3"/>
<line x1="817.7" y1="197.2" x2="823.3" y2="197.2" stroke="#dedede" stroke-width="1.9"/>
<text transform="translate(800.62 205) scale(0.800 1)" font-size="18.3" fill="#dcdcdc" stroke="#dcdcdc" stroke-width="0.3">15</text>
<line x1="817.7" y1="256.12" x2="823.3" y2="256.12" stroke="#dedede" stroke-width="1.9"/>
<text transform="translate(800.62 263.92) scale(0.800 1)" font-size="18.3" fill="#dcdcdc" stroke="#dcdcdc" stroke-width="0.3">10</text>
<line x1="817.7" y1="315.03" x2="823.3" y2="315.03" stroke="#dedede" stroke-width="1.9"/>
<text transform="translate(808.76 322.83) scale(0.800 1)" font-size="18.3" fill="#dcdcdc" stroke="#dcdcdc" stroke-width="0.3">5</text>
<line x1="817.7" y1="373.95" x2="823.3" y2="373.95" stroke="#dedede" stroke-width="1.9"/>
<text transform="translate(808.76 381.75) scale(0.800 1)" font-size="18.3" fill="#dcdcdc" stroke="#dcdcdc" stroke-width="0.3">0</text>
<line x1="817.7" y1="432.87" x2="823.3" y2="432.87" stroke="#dedede" stroke-width="1.9"/>
<text transform="translate(803.88 440.67) scale(0.800 1)" font-size="18.3" fill="#dcdcdc" stroke="#dcdcdc" stroke-width="0.3">-5</text>
<line x1="817.7" y1="491.78" x2="823.3" y2="491.78" stroke="#dedede" stroke-width="1.9"/>
<text transform="translate(795.74 499.58) scale(0.800 1)" font-size="18.3" fill="#dcdcdc" stroke="#dcdcdc" stroke-width="0.3">-10</text>
<line x1="817.7" y1="549.6" x2="823.3" y2="549.6" stroke="#dedede" stroke-width="1.9"/>
<text transform="translate(795.74 557.5) scale(0.800 1)" font-size="18.3" fill="#dcdcdc" stroke="#dcdcdc" stroke-width="0.3">-15</text>
<text transform="translate(861.51 190) scale(0.800 1)" font-size="18.8" fill="#dcdcdc" stroke="#dcdcdc" stroke-width="0.3">DeltaC</text>
<text transform="translate(879.27 568.9) scale(0.800 1)" font-size="18.5" fill="#dcdcdc" stroke="#dcdcdc" stroke-width="0.3">100%</text>
<rect x="838.75" y="348.1" width="118.75" height="25.65" fill="#000"/>
<rect x="839.75" y="349.3" width="116.75" height="23.65" fill="url(#yb)"/>
<rect x="1027.3" y="197" width="148.7" height="352.4" fill="#242424"/>
<line x1="1027.3" y1="255.92" x2="1176" y2="255.92" stroke="#929292" stroke-width="1.2"/>
<line x1="1027.3" y1="314.83" x2="1176" y2="314.83" stroke="#929292" stroke-width="1.2"/>
<line x1="1027.3" y1="373.75" x2="1176" y2="373.75" stroke="#929292" stroke-width="1.2"/>
<line x1="1027.3" y1="432.67" x2="1176" y2="432.67" stroke="#929292" stroke-width="1.2"/>
<line x1="1027.3" y1="491.58" x2="1176" y2="491.58" stroke="#929292" stroke-width="1.2"/>
<path d="M1027.3 197V549.4H1176V197" fill="none" stroke="#929292" stroke-width="1.3"/>
<line x1="1026.7" y1="197.3" x2="1176.6" y2="197.3" stroke="#8e8e8e" stroke-width="3.5"/>
<line x1="1026.7" y1="549.4" x2="1176.6" y2="549.4" stroke="#949494" stroke-width="1.8"/>
<line x1="1027.3" y1="549.4" x2="1027.3" y2="556.4" stroke="#ccc" stroke-width="1.3"/>
<line x1="1176" y1="549.4" x2="1176" y2="556.4" stroke="#ccc" stroke-width="1.3"/>
<line x1="1021.7" y1="197.2" x2="1027.3" y2="197.2" stroke="#dedede" stroke-width="1.9"/>
<text transform="translate(1004.62 205) scale(0.800 1)" font-size="18.3" fill="#dcdcdc" stroke="#dcdcdc" stroke-width="0.3">15</text>
<line x1="1021.7" y1="256.12" x2="1027.3" y2="256.12" stroke="#dedede" stroke-width="1.9"/>
<text transform="translate(1004.62 263.92) scale(0.800 1)" font-size="18.3" fill="#dcdcdc" stroke="#dcdcdc" stroke-width="0.3">10</text>
<line x1="1021.7" y1="315.03" x2="1027.3" y2="315.03" stroke="#dedede" stroke-width="1.9"/>
<text transform="translate(1012.76 322.83) scale(0.800 1)" font-size="18.3" fill="#dcdcdc" stroke="#dcdcdc" stroke-width="0.3">5</text>
<line x1="1021.7" y1="373.95" x2="1027.3" y2="373.95" stroke="#dedede" stroke-width="1.9"/>
<text transform="translate(1012.76 381.75) scale(0.800 1)" font-size="18.3" fill="#dcdcdc" stroke="#dcdcdc" stroke-width="0.3">0</text>
<line x1="1021.7" y1="432.87" x2="1027.3" y2="432.87" stroke="#dedede" stroke-width="1.9"/>
<text transform="translate(1007.88 440.67) scale(0.800 1)" font-size="18.3" fill="#dcdcdc" stroke="#dcdcdc" stroke-width="0.3">-5</text>
<line x1="1021.7" y1="491.78" x2="1027.3" y2="491.78" stroke="#dedede" stroke-width="1.9"/>
<text transform="translate(999.74 499.58) scale(0.800 1)" font-size="18.3" fill="#dcdcdc" stroke="#dcdcdc" stroke-width="0.3">-10</text>
<line x1="1021.7" y1="549.6" x2="1027.3" y2="549.6" stroke="#dedede" stroke-width="1.9"/>
<text transform="translate(999.74 557.5) scale(0.800 1)" font-size="18.3" fill="#dcdcdc" stroke="#dcdcdc" stroke-width="0.3">-15</text>
<text transform="translate(1064.96 190) scale(0.800 1)" font-size="18.8" fill="#dcdcdc" stroke="#dcdcdc" stroke-width="0.3">DeltaH</text>
<text transform="translate(1082.72 568.9) scale(0.800 1)" font-size="18.5" fill="#dcdcdc" stroke="#dcdcdc" stroke-width="0.3">100%</text>
<rect x="1042.3" y="335" width="118.4" height="38.75" fill="#000"/>
<rect x="1043.3" y="336.2" width="116.4" height="36.75" fill="url(#yb)"/>
<rect x="608" y="590" width="102" height="166" fill="#fff"/>
<rect x="609" y="591" width="100" height="82" fill="#bcc2a8"/>
<rect x="609" y="672.7" width="100" height="82.3" fill="#bfbfa1"/>
<text transform="translate(647.1 775) scale(0.820 1)" font-size="14.5" fill="#fff" stroke="#fff" stroke-width="0.35">20%</text>
<rect x="727" y="590" width="103" height="166" fill="#fff"/>
<rect x="728" y="591" width="101" height="82" fill="#bbc38c"/>
<rect x="728" y="672.7" width="101" height="82.3" fill="#c0c084"/>
<text transform="translate(766.6 775) scale(0.820 1)" font-size="14.5" fill="#fff" stroke="#fff" stroke-width="0.35">40%</text>
<rect x="846" y="590" width="103" height="166" fill="#fff"/>
<rect x="847" y="591" width="101" height="82" fill="#b9c26c"/>
<rect x="847" y="672.7" width="101" height="82.3" fill="#c0bf68"/>
<text transform="translate(885.6 775) scale(0.820 1)" font-size="14.5" fill="#fff" stroke="#fff" stroke-width="0.35">60%</text>
<rect x="966" y="590" width="102" height="166" fill="#fff"/>
<rect x="967" y="591" width="100" height="82" fill="#b9bf4e"/>
<rect x="967" y="672.7" width="100" height="82.3" fill="#c0bf4a"/>
<text transform="translate(1005.1 775) scale(0.820 1)" font-size="14.5" fill="#fff" stroke="#fff" stroke-width="0.35">80%</text>
<rect x="1085" y="590" width="102" height="166" fill="#fff"/>
<rect x="1086" y="591" width="100" height="82" fill="#bcbe00"/>
<rect x="1086" y="672.7" width="100" height="82.3" fill="#c0bc0e"/>
<text transform="translate(1120.79 775) scale(0.820 1)" font-size="14.5" fill="#fff" stroke="#fff" stroke-width="0.35">100%</text>
<text transform="translate(600.3 649.3) rotate(-90) scale(1.17 1)" font-size="13.5" fill="#fff" stroke="#fff" stroke-width=".35">Actual</text>
<text transform="translate(600.3 741.3) rotate(-90) scale(1.17 1)" font-size="13.5" fill="#fff" stroke="#fff" stroke-width=".35">Target</text>
<text transform="translate(1517 136.8) scale(0.795 1)" font-size="18.8" fill="#dcdcdc" stroke="#dcdcdc" stroke-width="0.3">CIE 1976 u&#x27;v&#x27;</text>
<path d="M1249.8 144H1908.3V757.6H1249.8Z" fill="none" stroke="#a4a4a4" stroke-width="1.3"/>
<line x1="1249.5" y1="757.6" x2="1249.5" y2="765.6" stroke="#dedede" stroke-width="1.6"/>
<text transform="translate(1245.38 785) scale(0.800 1)" font-size="18.5" fill="#dcdcdc" stroke="#dcdcdc" stroke-width="0.3">0</text>
<line x1="1243.3" y1="758.3" x2="1249.8" y2="758.3" stroke="#dedede" stroke-width="1.6"/>
<text transform="translate(1234.27 766.6) scale(0.800 1)" font-size="18.5" fill="#dcdcdc" stroke="#dcdcdc" stroke-width="0.3">0</text>
<line x1="1304.3" y1="757.6" x2="1304.3" y2="765.6" stroke="#dedede" stroke-width="1.6"/>
<text transform="translate(1289.9 785) scale(0.800 1)" font-size="18.5" fill="#dcdcdc" stroke="#dcdcdc" stroke-width="0.3">0.05</text>
<line x1="1243.3" y1="707.15" x2="1249.8" y2="707.15" stroke="#dedede" stroke-width="1.6"/>
<text transform="translate(1213.69 715.45) scale(0.800 1)" font-size="18.5" fill="#dcdcdc" stroke="#dcdcdc" stroke-width="0.3">0.05</text>
<line x1="1359.1" y1="757.6" x2="1359.1" y2="765.6" stroke="#dedede" stroke-width="1.6"/>
<text transform="translate(1348.81 785) scale(0.800 1)" font-size="18.5" fill="#dcdcdc" stroke="#dcdcdc" stroke-width="0.3">0.1</text>
<line x1="1243.3" y1="656" x2="1249.8" y2="656" stroke="#dedede" stroke-width="1.6"/>
<text transform="translate(1221.93 664.3) scale(0.800 1)" font-size="18.5" fill="#dcdcdc" stroke="#dcdcdc" stroke-width="0.3">0.1</text>
<line x1="1413.9" y1="757.6" x2="1413.9" y2="765.6" stroke="#dedede" stroke-width="1.6"/>
<text transform="translate(1399.5 785) scale(0.800 1)" font-size="18.5" fill="#dcdcdc" stroke="#dcdcdc" stroke-width="0.3">0.15</text>
<line x1="1243.3" y1="605.35" x2="1249.8" y2="605.35" stroke="#dedede" stroke-width="1.6"/>
<text transform="translate(1213.69 613.15) scale(0.800 1)" font-size="18.5" fill="#dcdcdc" stroke="#dcdcdc" stroke-width="0.3">0.15</text>
<line x1="1468.7" y1="757.6" x2="1468.7" y2="765.6" stroke="#dedede" stroke-width="1.6"/>
<text transform="translate(1458.41 785) scale(0.800 1)" font-size="18.5" fill="#dcdcdc" stroke="#dcdcdc" stroke-width="0.3">0.2</text>
<line x1="1243.3" y1="554.2" x2="1249.8" y2="554.2" stroke="#dedede" stroke-width="1.6"/>
<text transform="translate(1221.93 562) scale(0.800 1)" font-size="18.5" fill="#dcdcdc" stroke="#dcdcdc" stroke-width="0.3">0.2</text>
<line x1="1523.5" y1="757.6" x2="1523.5" y2="765.6" stroke="#dedede" stroke-width="1.6"/>
<text transform="translate(1509.1 785) scale(0.800 1)" font-size="18.5" fill="#dcdcdc" stroke="#dcdcdc" stroke-width="0.3">0.25</text>
<line x1="1243.3" y1="503.95" x2="1249.8" y2="503.95" stroke="#dedede" stroke-width="1.6"/>
<text transform="translate(1213.69 510.85) scale(0.800 1)" font-size="18.5" fill="#dcdcdc" stroke="#dcdcdc" stroke-width="0.3">0.25</text>
<line x1="1578.3" y1="757.6" x2="1578.3" y2="765.6" stroke="#dedede" stroke-width="1.6"/>
<text transform="translate(1568.01 785) scale(0.800 1)" font-size="18.5" fill="#dcdcdc" stroke="#dcdcdc" stroke-width="0.3">0.3</text>
<line x1="1243.3" y1="453.3" x2="1249.8" y2="453.3" stroke="#dedede" stroke-width="1.6"/>
<text transform="translate(1221.93 459.7) scale(0.800 1)" font-size="18.5" fill="#dcdcdc" stroke="#dcdcdc" stroke-width="0.3">0.3</text>
<line x1="1633.1" y1="757.6" x2="1633.1" y2="765.6" stroke="#dedede" stroke-width="1.6"/>
<text transform="translate(1618.7 785) scale(0.800 1)" font-size="18.5" fill="#dcdcdc" stroke="#dcdcdc" stroke-width="0.3">0.35</text>
<line x1="1243.3" y1="402.15" x2="1249.8" y2="402.15" stroke="#dedede" stroke-width="1.6"/>
<text transform="translate(1213.69 408.55) scale(0.800 1)" font-size="18.5" fill="#dcdcdc" stroke="#dcdcdc" stroke-width="0.3">0.35</text>
<line x1="1687.9" y1="757.6" x2="1687.9" y2="765.6" stroke="#dedede" stroke-width="1.6"/>
<text transform="translate(1677.61 785) scale(0.800 1)" font-size="18.5" fill="#dcdcdc" stroke="#dcdcdc" stroke-width="0.3">0.4</text>
<line x1="1243.3" y1="349.1" x2="1249.8" y2="349.1" stroke="#dedede" stroke-width="1.6"/>
<text transform="translate(1221.93 357.4) scale(0.800 1)" font-size="18.5" fill="#dcdcdc" stroke="#dcdcdc" stroke-width="0.3">0.4</text>
<line x1="1742.7" y1="757.6" x2="1742.7" y2="765.6" stroke="#dedede" stroke-width="1.6"/>
<text transform="translate(1728.3 785) scale(0.800 1)" font-size="18.5" fill="#dcdcdc" stroke="#dcdcdc" stroke-width="0.3">0.45</text>
<line x1="1243.3" y1="297.95" x2="1249.8" y2="297.95" stroke="#dedede" stroke-width="1.6"/>
<text transform="translate(1213.69 306.25) scale(0.800 1)" font-size="18.5" fill="#dcdcdc" stroke="#dcdcdc" stroke-width="0.3">0.45</text>
<line x1="1797.5" y1="757.6" x2="1797.5" y2="765.6" stroke="#dedede" stroke-width="1.6"/>
<text transform="translate(1787.21 785) scale(0.800 1)" font-size="18.5" fill="#dcdcdc" stroke="#dcdcdc" stroke-width="0.3">0.5</text>
<line x1="1243.3" y1="246.8" x2="1249.8" y2="246.8" stroke="#dedede" stroke-width="1.6"/>
<text transform="translate(1221.93 255.1) scale(0.800 1)" font-size="18.5" fill="#dcdcdc" stroke="#dcdcdc" stroke-width="0.3">0.5</text>
<line x1="1852.3" y1="757.6" x2="1852.3" y2="765.6" stroke="#dedede" stroke-width="1.6"/>
<text transform="translate(1837.9 785) scale(0.800 1)" font-size="18.5" fill="#dcdcdc" stroke="#dcdcdc" stroke-width="0.3">0.55</text>
<line x1="1243.3" y1="195.65" x2="1249.8" y2="195.65" stroke="#dedede" stroke-width="1.6"/>
<text transform="translate(1213.69 203.95) scale(0.800 1)" font-size="18.5" fill="#dcdcdc" stroke="#dcdcdc" stroke-width="0.3">0.55</text>
<g fill-opacity=".13" stroke="#fff" stroke-width="1.6"><rect x="1378.4" y="172.3" width="14" height="17" fill="#00ff00"/><rect x="1391.5" y="187.95" width="14" height="17" fill="#00ff00"/><rect x="1404" y="202.95" width="14" height="17" fill="#00ff00"/><rect x="1419.45" y="221.9" width="14" height="17" fill="#00ff00"/><rect x="1437.2" y="242.1" width="14" height="17" fill="#00ff00"/><rect x="1465.1" y="182.3" width="14" height="17" fill="#ffff00"/><rect x="1464.45" y="196.9" width="14" height="17" fill="#ffff00"/><rect x="1463.8" y="212.95" width="14" height="17" fill="#ffff00"/><rect x="1462.8" y="228.8" width="14" height="17" fill="#ffff00"/><rect x="1461.1" y="247.3" width="14" height="17" fill="#ffff00"/><rect x="1393.8" y="282.95" width="14" height="17" fill="#00ffff"/><rect x="1407.2" y="279.6" width="14" height="17" fill="#00ffff"/><rect x="1419.45" y="277.5" width="14" height="17" fill="#00ffff"/><rect x="1433.2" y="274.4" width="14" height="17" fill="#00ffff"/><rect x="1445.7" y="272.3" width="14" height="17" fill="#00ffff"/><rect x="1736.5" y="213" width="14" height="17" fill="#ff0000"/><rect x="1670.5" y="227.4" width="14" height="17" fill="#ff0000"/><rect x="1614.5" y="239.4" width="14" height="17" fill="#ff0000"/><rect x="1563.8" y="247.3" width="14" height="17" fill="#ff0000"/><rect x="1508.8" y="258.8" width="14" height="17" fill="#ff0000"/><rect x="1576.5" y="410" width="14" height="17" fill="#ff00ff"/><rect x="1542.9" y="371" width="14" height="17" fill="#ff00ff"/><rect x="1515.9" y="339" width="14" height="17" fill="#ff00ff"/><rect x="1496.2" y="313.7" width="14" height="17" fill="#ff00ff"/><rect x="1476.9" y="289.4" width="14" height="17" fill="#ff00ff"/><rect x="1435.2" y="587.4" width="14" height="17" fill="#0000ff"/><rect x="1443.5" y="480" width="14" height="17" fill="#0000ff"/><rect x="1449.2" y="408.7" width="14" height="17" fill="#0000ff"/><rect x="1453.2" y="352.7" width="14" height="17" fill="#0000ff"/><rect x="1455.9" y="306.7" width="14" height="17" fill="#0000ff"/></g>
<rect x="1458.3" y="268.6" width="13.6" height="16.8" fill="none" stroke="#000" stroke-width="2"/>
<g stroke="#000" stroke-width="1.4"><ellipse cx="1388.6" cy="181.4" rx="4.4" ry="5.3" fill="#00be00"/><ellipse cx="1400.3" cy="196.2" rx="4.4" ry="5.3" fill="#39be39"/><ellipse cx="1412.2" cy="211.65" rx="4.4" ry="5.3" fill="#56be56"/><ellipse cx="1426.75" cy="230" rx="4.4" ry="5.3" fill="#72be72"/><ellipse cx="1442.2" cy="251.9" rx="4.4" ry="5.3" fill="#90be90"/><ellipse cx="1467.2" cy="189.8" rx="4.4" ry="5.3" fill="#bebe00"/><ellipse cx="1466.3" cy="206.2" rx="4.4" ry="5.3" fill="#bebe39"/><ellipse cx="1466.1" cy="222.3" rx="4.4" ry="5.3" fill="#bebe56"/><ellipse cx="1464.25" cy="239.15" rx="4.4" ry="5.3" fill="#bebe72"/><ellipse cx="1464.25" cy="259.15" rx="4.4" ry="5.3" fill="#bebe90"/><ellipse cx="1404" cy="291.2" rx="4.4" ry="5.3" fill="#00bebe"/><ellipse cx="1417.2" cy="290" rx="4.4" ry="5.3" fill="#39bebe"/><ellipse cx="1428.2" cy="287.9" rx="4.4" ry="5.3" fill="#56bebe"/><ellipse cx="1439" cy="286" rx="4.4" ry="5.3" fill="#72bebe"/><ellipse cx="1450.1" cy="283.1" rx="4.4" ry="5.3" fill="#90bebe"/><ellipse cx="1735.2" cy="222.1" rx="4.4" ry="5.3" fill="#be0000"/><ellipse cx="1669.2" cy="237.4" rx="4.4" ry="5.3" fill="#be3939"/><ellipse cx="1606.2" cy="249.4" rx="4.4" ry="5.3" fill="#be5656"/><ellipse cx="1557" cy="261.2" rx="4.4" ry="5.3" fill="#be7272"/><ellipse cx="1508" cy="271" rx="4.4" ry="5.3" fill="#be9090"/><ellipse cx="1575.2" cy="434.4" rx="4.4" ry="5.3" fill="#be00be"/><ellipse cx="1541.8" cy="386.4" rx="4.4" ry="5.3" fill="#be39be"/><ellipse cx="1516.2" cy="352.7" rx="4.4" ry="5.3" fill="#be56be"/><ellipse cx="1498.2" cy="327.4" rx="4.4" ry="5.3" fill="#be72be"/><ellipse cx="1478.5" cy="302.1" rx="4.4" ry="5.3" fill="#be90be"/><ellipse cx="1450.2" cy="597.4" rx="4.4" ry="5.3" fill="#0000be"/><ellipse cx="1454.8" cy="492.4" rx="4.4" ry="5.3" fill="#3939be"/><ellipse cx="1457.5" cy="419.4" rx="4.4" ry="5.3" fill="#5656be"/><ellipse cx="1459.5" cy="364.1" rx="4.4" ry="5.3" fill="#7272be"/><ellipse cx="1461.8" cy="319.1" rx="4.4" ry="5.3" fill="#9090be"/><ellipse cx="1463.2" cy="283.3" rx="4.2" ry="5.3" fill="#fff"/></g>
<rect x="1784.8" y="648.7" width="14.4" height="16.6" fill="none" stroke="#fff" stroke-width="1.6"/>
<ellipse cx="1767.1" cy="630.1" rx="4.4" ry="5.3" fill="#c6c600" stroke="#000" stroke-width="1.4"/>
<text transform="translate(252.3 841.2) scale(0.829 1)" font-size="36.5" fill="#f2f2f2" stroke="#f2f2f2" stroke-width="0.7">Avg dE2000: 1.68</text>
<text transform="translate(248.3 892.2) scale(0.840 1)" font-size="36.5" fill="#f2f2f2" stroke="#f2f2f2" stroke-width="0.7">Max dE2000: 4.54</text>
<text transform="translate(216 951.2) scale(0.839 1)" font-size="36.5" fill="#f2f2f2" stroke="#f2f2f2" stroke-width="0.7">Current Reading</text>
<text transform="translate(216 996.2) scale(0.842 1)" font-size="30.5" fill="#f2f2f2" stroke="#f2f2f2" stroke-width="0.6">x: 0.4136</text>
<text transform="translate(376.7 996.2) scale(0.845 1)" font-size="30.5" fill="#f2f2f2" stroke="#f2f2f2" stroke-width="0.6">y: 0.5131</text>
<text transform="translate(216 1047.2) scale(0.834 1)" font-size="30.5" fill="#f2f2f2" stroke="#f2f2f2" stroke-width="0.6">fL: 54.78</text>
<text transform="translate(216 1089.4) scale(0.876 1)" font-size="30.5" fill="#f2f2f2" stroke="#f2f2f2" stroke-width="0.6">cd/m²: 187.68</text>
<rect x="564.3" y="850.7" width="260.7" height="225" fill="#242424"/>
<line x1="564.3" y1="908" x2="825" y2="908" stroke="#929292" stroke-width="1.2"/>
<line x1="564.3" y1="964" x2="825" y2="964" stroke="#929292" stroke-width="1.2"/>
<line x1="564.3" y1="1020" x2="825" y2="1020" stroke="#929292" stroke-width="1.2"/>
<path d="M564.3 850.7V1075.7H825V850.7" fill="none" stroke="#929292" stroke-width="1.3"/>
<line x1="563.7" y1="850.9" x2="825.6" y2="850.9" stroke="#949494" stroke-width="3.4"/>
<line x1="563.7" y1="1075.7" x2="825.6" y2="1075.7" stroke="#949494" stroke-width="2"/>
<line x1="564.3" y1="1075.7" x2="564.3" y2="1082.7" stroke="#ccc" stroke-width="1.3"/>
<line x1="825" y1="1075.7" x2="825" y2="1082.7" stroke="#ccc" stroke-width="1.3"/>
<line x1="559.3" y1="851.7" x2="564.3" y2="851.7" stroke="#dedede" stroke-width="1.8"/>
<text transform="translate(543.67 858) scale(0.800 1)" font-size="17" fill="#dcdcdc" stroke="#dcdcdc" stroke-width="0.3">20</text>
<line x1="559.3" y1="908" x2="564.3" y2="908" stroke="#dedede" stroke-width="1.8"/>
<text transform="translate(543.67 914.3) scale(0.800 1)" font-size="17" fill="#dcdcdc" stroke="#dcdcdc" stroke-width="0.3">10</text>
<line x1="559.3" y1="964" x2="564.3" y2="964" stroke="#dedede" stroke-width="1.8"/>
<text transform="translate(551.24 970.3) scale(0.800 1)" font-size="17" fill="#dcdcdc" stroke="#dcdcdc" stroke-width="0.3">0</text>
<line x1="559.3" y1="1020" x2="564.3" y2="1020" stroke="#dedede" stroke-width="1.8"/>
<text transform="translate(539.14 1026.3) scale(0.800 1)" font-size="17" fill="#dcdcdc" stroke="#dcdcdc" stroke-width="0.3">-10</text>
<line x1="559.3" y1="1076" x2="564.3" y2="1076" stroke="#dedede" stroke-width="1.8"/>
<text transform="translate(539.14 1083.8) scale(0.800 1)" font-size="17" fill="#dcdcdc" stroke="#dcdcdc" stroke-width="0.3">-20</text>
<text transform="translate(639.35 844) scale(0.785 1)" font-size="17.8" fill="#dcdcdc" stroke="#dcdcdc" stroke-width="0.3">RGB Balance</text>
<text transform="translate(676.58 1096) scale(0.800 1)" font-size="18" fill="#dcdcdc" stroke="#dcdcdc" stroke-width="0.3">100%</text>
<rect x="591.2" y="963.5" width="70" height="33" fill="#000"/>
<rect x="592.5" y="964.8" width="67.4" height="30.4" fill="url(#rr)"/>
<rect x="661.2" y="948.5" width="69.3" height="16" fill="#000"/>
<rect x="662.5" y="949.8" width="66.7" height="13.4" fill="url(#rg)"/>
<rect x="731.2" y="963.5" width="70" height="62" fill="#000"/>
<rect x="732.5" y="964.8" width="67.4" height="59.4" fill="url(#rb)"/>
<text transform="translate(1039.6 837.5) scale(1.150 1)" font-size="19.6" fill="#fff" stroke="#fff" stroke-width="0.45">20%</text>
<text transform="translate(1151.2 837.5) scale(1.150 1)" font-size="19.6" fill="#fff" stroke="#fff" stroke-width="0.45">40%</text>
<text transform="translate(1262.8 837.5) scale(1.150 1)" font-size="19.6" fill="#fff" stroke="#fff" stroke-width="0.45">60%</text>
<text transform="translate(1374.4 837.5) scale(1.150 1)" font-size="19.6" fill="#fff" stroke="#fff" stroke-width="0.45">80%</text>
<text transform="translate(1486 837.5) scale(1.150 1)" font-size="19.6" fill="#fff" stroke="#fff" stroke-width="0.45">100%</text>
<text transform="translate(875.2 870.8) scale(1.170 1)" font-size="19.6" fill="#f4f4f4">x: CIE31</text>
<text transform="translate(1039.6 870.8) scale(1.170 1)" font-size="19.6" fill="#f4f4f4">0.3271</text>
<text transform="translate(1151.2 870.8) scale(1.170 1)" font-size="19.6" fill="#f4f4f4">0.3484</text>
<text transform="translate(1262.8 870.8) scale(1.170 1)" font-size="19.6" fill="#f4f4f4">0.3690</text>
<text transform="translate(1374.4 870.8) scale(1.170 1)" font-size="19.6" fill="#f4f4f4">0.3888</text>
<text transform="translate(1486 870.8) scale(1.170 1)" font-size="19.6" fill="#f4f4f4">0.4136</text>
<text transform="translate(875.2 902.9) scale(1.170 1)" font-size="19.6" fill="#f4f4f4">y: CIE31</text>
<text transform="translate(1039.6 902.9) scale(1.170 1)" font-size="19.6" fill="#f4f4f4">0.3623</text>
<text transform="translate(1151.2 902.9) scale(1.170 1)" font-size="19.6" fill="#f4f4f4">0.3998</text>
<text transform="translate(1262.8 902.9) scale(1.170 1)" font-size="19.6" fill="#f4f4f4">0.4360</text>
<text transform="translate(1374.4 902.9) scale(1.170 1)" font-size="19.6" fill="#f4f4f4">0.4706</text>
<text transform="translate(1486 902.9) scale(1.170 1)" font-size="19.6" fill="#f4f4f4">0.5131</text>
<text transform="translate(875.2 935.2) scale(1.170 1)" font-size="19.6" fill="#f4f4f4">Y</text>
<text transform="translate(1039.6 935.2) scale(1.170 1)" font-size="19.6" fill="#f4f4f4">199.6481</text>
<text transform="translate(1151.2 935.2) scale(1.170 1)" font-size="19.6" fill="#f4f4f4">196.0202</text>
<text transform="translate(1262.8 935.2) scale(1.170 1)" font-size="19.6" fill="#f4f4f4">193.1767</text>
<text transform="translate(1374.4 935.2) scale(1.170 1)" font-size="19.6" fill="#f4f4f4">190.8640</text>
<text transform="translate(1486 935.2) scale(1.170 1)" font-size="19.6" fill="#f4f4f4">187.6846</text>
<text transform="translate(875.2 967.05) scale(1.170 1)" font-size="19.6" fill="#f4f4f4">Target x:CIE31</text>
<text transform="translate(1039.6 967.05) scale(1.170 1)" font-size="19.6" fill="#f4f4f4">0.3344</text>
<text transform="translate(1151.2 967.05) scale(1.170 1)" font-size="19.6" fill="#f4f4f4">0.3564</text>
<text transform="translate(1262.8 967.05) scale(1.170 1)" font-size="19.6" fill="#f4f4f4">0.3773</text>
<text transform="translate(1374.4 967.05) scale(1.170 1)" font-size="19.6" fill="#f4f4f4">0.3969</text>
<text transform="translate(1486 967.05) scale(1.170 1)" font-size="19.6" fill="#f4f4f4">0.4193</text>
<text transform="translate(875.2 999.3) scale(1.170 1)" font-size="19.6" fill="#f4f4f4">Target y:CIE31</text>
<text transform="translate(1039.6 999.3) scale(1.170 1)" font-size="19.6" fill="#f4f4f4">0.3648</text>
<text transform="translate(1151.2 999.3) scale(1.170 1)" font-size="19.6" fill="#f4f4f4">0.4013</text>
<text transform="translate(1262.8 999.3) scale(1.170 1)" font-size="19.6" fill="#f4f4f4">0.4358</text>
<text transform="translate(1374.4 999.3) scale(1.170 1)" font-size="19.6" fill="#f4f4f4">0.4682</text>
<text transform="translate(1486 999.3) scale(1.170 1)" font-size="19.6" fill="#f4f4f4">0.5053</text>
<text transform="translate(875.2 1031.6) scale(1.170 1)" font-size="19.6" fill="#f4f4f4">Target Y</text>
<text transform="translate(1039.6 1031.6) scale(1.170 1)" font-size="19.6" fill="#f4f4f4">196.3506</text>
<text transform="translate(1151.2 1031.6) scale(1.170 1)" font-size="19.6" fill="#f4f4f4">192.9040</text>
<text transform="translate(1262.8 1031.6) scale(1.170 1)" font-size="19.6" fill="#f4f4f4">190.2559</text>
<text transform="translate(1374.4 1031.6) scale(1.170 1)" font-size="19.6" fill="#f4f4f4">188.1776</text>
<text transform="translate(1486 1031.6) scale(1.170 1)" font-size="19.6" fill="#f4f4f4">186.1684</text>
<text transform="translate(875.2 1063.9) scale(1.170 1)" font-size="19.6" fill="#f4f4f4">ΔE 2000</text>
<text transform="translate(1039.6 1063.9) scale(1.170 1)" font-size="19.6" fill="#f4f4f4">2.7001</text>
<text transform="translate(1151.2 1063.9) scale(1.170 1)" font-size="19.6" fill="#f4f4f4">2.2542</text>
<text transform="translate(1262.8 1063.9) scale(1.170 1)" font-size="19.6" fill="#f4f4f4">2.1253</text>
<text transform="translate(1374.4 1063.9) scale(1.170 1)" font-size="19.6" fill="#f4f4f4">2.0467</text>
<text transform="translate(1486 1063.9) scale(1.170 1)" font-size="19.6" fill="#f4f4f4">1.7515</text>
<text transform="translate(875.2 1096.1) scale(1.170 1)" font-size="19.6" fill="#f4f4f4">dEITP</text>
<text transform="translate(1039.6 1096.1) scale(1.170 1)" font-size="19.6" fill="#f4f4f4">4.3385</text>
<text transform="translate(1151.2 1096.1) scale(1.170 1)" font-size="19.6" fill="#f4f4f4">4.6091</text>
<text transform="translate(1262.8 1096.1) scale(1.170 1)" font-size="19.6" fill="#f4f4f4">4.7234</text>
<text transform="translate(1374.4 1096.1) scale(1.170 1)" font-size="19.6" fill="#f4f4f4">4.6836</text>
<text transform="translate(1486 1096.1) scale(1.170 1)" font-size="19.6" fill="#f4f4f4">4.7158</text>
<circle cx="223.6" cy="1117" r="7.6" fill="url(#upc)"/><path d="M219.2 1119h8.8l-4.4-4.6z" fill="#1a1a1a"/>
<text transform="translate(316.42 1164) scale(0.970 1)" font-size="11" fill="#1c1c1c" font-weight="bold">20%</text>
<text transform="translate(468.12 1164) scale(0.970 1)" font-size="11" fill="#1c1c1c" font-weight="bold">40%</text>
<text transform="translate(620.12 1164) scale(0.970 1)" font-size="11" fill="#1c1c1c" font-weight="bold">60%</text>
<text transform="translate(772.32 1164) scale(0.970 1)" font-size="11" fill="#1c1c1c" font-weight="bold">80%</text>
<text transform="translate(921.15 1164) scale(0.970 1)" font-size="11" fill="#fff" font-weight="bold">100%</text>
<circle cx="1668.2" cy="1126.5" r="8.5" fill="#606060"/><circle cx="1668.2" cy="1126.5" r="2.5" fill="#999"/>
<circle cx="1713.4" cy="1126.5" r="8.5" fill="#606060"/><circle cx="1713.4" cy="1126.5" r="2.5" fill="#999"/>
<circle cx="1758.6" cy="1126.5" r="8.5" fill="#606060"/><circle cx="1758.6" cy="1126.5" r="2.5" fill="#999"/>
<circle cx="1803.8" cy="1126.5" r="8.5" fill="#606060"/><circle cx="1803.8" cy="1126.5" r="2.5" fill="#999"/>
<circle cx="1849" cy="1126.5" r="8.5" fill="#606060"/><circle cx="1849" cy="1126.5" r="2.5" fill="#999"/>
<circle cx="1896" cy="1126.5" r="8.5" fill="#3a3a3a"/>
<rect x="1606.4" y="1134" width="28" height="27.4" rx="4" fill="none" stroke="#2a2a2a" stroke-width="2"/><rect x="1613.8" y="1141" width="14.2" height="13.4" fill="#000"/>
<circle cx="1676.7" cy="1153.5" r="10" fill="url(#nbc)"/><circle cx="1889.8" cy="1153.5" r="10" fill="url(#nbc)"/>
<text transform="translate(1671.97 1158.6) scale(1.000 1)" font-size="17" fill="#2a2a2a">«</text>
<text transform="translate(1885.07 1158.6) scale(1.000 1)" font-size="17" fill="#2a2a2a">»</text>
<text transform="translate(1703.3 1161.3) scale(1.061 1)" font-size="21.7" fill="#2a2a2a" stroke="#2a2a2a" stroke-width=".6">Back</text>
<text transform="translate(1810.2 1161.3) scale(1.161 1)" font-size="21.7" fill="#2a2a2a" stroke="#2a2a2a" stroke-width=".6">Next</text>
<g opacity=".7" stroke-linejoin="round" stroke-linecap="round"><path d="M1536.5 1089.5l51 12.5v28.5l35 6-53 15.5-33-14.5z" fill="none" stroke="#e8e8e8" stroke-width="9.5"/><path d="M1536.5 1089.5l51 12.5v28.5l35 6-53 15.5-33-14.5z" fill="none" stroke="#a83a42" stroke-width="6.5"/><path d="M1551 1108l13.5 16.5 27-36.5" fill="none" stroke="#e8e8e8" stroke-width="8"/><path d="M1551 1108l13.5 16.5 27-36.5" fill="none" stroke="#3a3a3a" stroke-width="5"/></g>
<g opacity=".72" font-weight="bold" font-size="36.8" stroke-linejoin="round" paint-order="stroke" stroke="#f4f4f4" stroke-width="3"><text transform="translate(1594 1126.3) scale(0.926 1)" fill="#a02a36">NOTEBOOK</text><text transform="translate(1791.3 1126.3) scale(0.904 1)" fill="#303030">CHECK</text></g>
</svg>

</div></body></html>
